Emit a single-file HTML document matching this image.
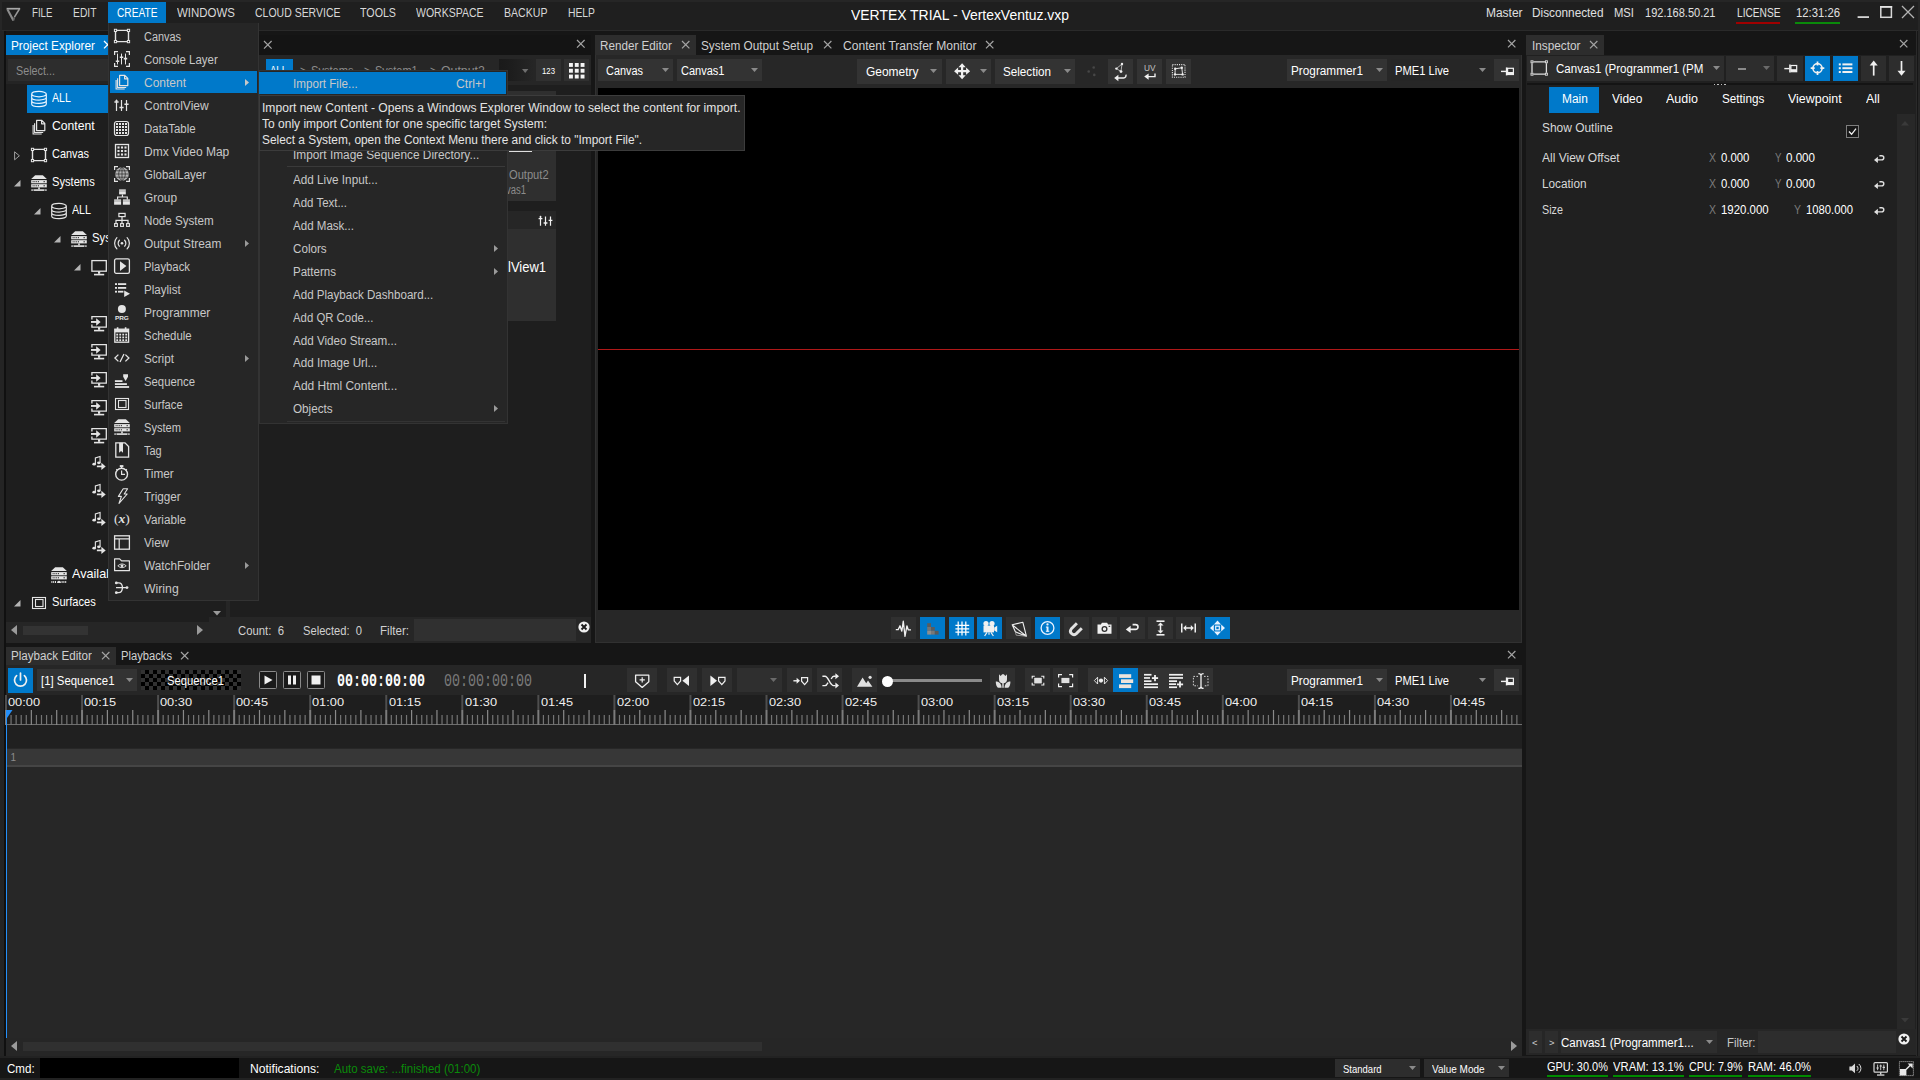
<!DOCTYPE html>
<html lang="en"><head><meta charset="utf-8"><title>VERTEX TRIAL - VertexVentuz.vxp</title>
<style>
html,body{margin:0;padding:0;background:#161616;overflow:hidden}
body{width:1920px;height:1080px;position:relative;font-family:"Liberation Sans",sans-serif;}
#app{position:absolute;left:0;top:0;width:1920px;height:1080px;overflow:hidden;background:#161616}
#app div,#app span,#app svg{position:absolute}
.t{white-space:pre;transform-origin:0 0;display:block}
svg{overflow:visible}
.i{fill:none;stroke:#e6e6e6;stroke-width:1.2}
.f{fill:#e6e6e6;stroke:none}
</style></head><body><div id="app">
<div style="left:0px;top:0px;width:1920px;height:30px;background:#1f1f1f;"></div>
<div style="left:0px;top:30px;width:1920px;height:1px;background:#2a2a2a;"></div>
<div style="left:0px;top:0px;width:1920px;height:2px;background:#262626;"></div>
<div style="left:0px;top:0px;width:2px;height:31px;background:#262626;"></div>
<div style="left:1918px;top:0px;width:2px;height:1080px;background:#262626;"></div>
<div style="left:1916.4px;top:31px;width:0.9px;height:1025px;background:#2a2a2a;"></div>
<div style="left:0px;top:31px;width:4px;height:1025px;background:#242424;"></div>
<div style="left:4px;top:31px;width:2px;height:1025px;background:#101010;"></div>
<div style="left:108px;top:2px;width:58px;height:21px;background:#0079ca;"></div>
<span class="t" style="left:32px;top:7px;font-size:12.5px;line-height:12.5px;color:#d8d8d8;transform:scaleX(0.7763);">FILE</span>
<span class="t" style="left:73px;top:7px;font-size:12.5px;line-height:12.5px;color:#d8d8d8;transform:scaleX(0.8250);">EDIT</span>
<span class="t" style="left:176.5px;top:7px;font-size:12.5px;line-height:12.5px;color:#d8d8d8;transform:scaleX(0.9179);">WINDOWS</span>
<span class="t" style="left:254.5px;top:7px;font-size:12.5px;line-height:12.5px;color:#d8d8d8;transform:scaleX(0.8391);">CLOUD SERVICE</span>
<span class="t" style="left:360px;top:7px;font-size:12.5px;line-height:12.5px;color:#d8d8d8;transform:scaleX(0.8540);">TOOLS</span>
<span class="t" style="left:416px;top:7px;font-size:12.5px;line-height:12.5px;color:#d8d8d8;transform:scaleX(0.8401);">WORKSPACE</span>
<span class="t" style="left:504px;top:7px;font-size:12.5px;line-height:12.5px;color:#d8d8d8;transform:scaleX(0.8462);">BACKUP</span>
<span class="t" style="left:567.5px;top:7px;font-size:12.5px;line-height:12.5px;color:#d8d8d8;transform:scaleX(0.8268);">HELP</span>
<span class="t" style="left:116.5px;top:7px;font-size:12.5px;line-height:12.5px;color:#ffffff;transform:scaleX(0.8136);">CREATE</span>
<span class="t" style="left:851px;top:8px;font-size:14.5px;line-height:14.5px;color:#ffffff;transform:scaleX(0.9603);">VERTEX TRIAL - VertexVentuz.vxp</span>
<span class="t" style="left:1485.5px;top:7px;font-size:12.5px;line-height:12.5px;color:#e0e0e0;transform:scaleX(0.9554);">Master</span>
<span class="t" style="left:1532px;top:7px;font-size:12.5px;line-height:12.5px;color:#e0e0e0;transform:scaleX(0.9439);">Disconnected</span>
<span class="t" style="left:1613.7px;top:7px;font-size:12.5px;line-height:12.5px;color:#e0e0e0;transform:scaleX(0.8995);">MSI</span>
<span class="t" style="left:1645px;top:7px;font-size:12.5px;line-height:12.5px;color:#e0e0e0;transform:scaleX(0.8818);">192.168.50.21</span>
<span class="t" style="left:1736.5px;top:7px;font-size:12.5px;line-height:12.5px;color:#e0e0e0;transform:scaleX(0.8131);">LICENSE</span>
<span class="t" style="left:1795.5px;top:7px;font-size:12.5px;line-height:12.5px;color:#e0e0e0;transform:scaleX(0.9040);">12:31:26</span>
<div style="left:1736px;top:22px;width:44px;height:2px;background:#a00000;"></div>
<div style="left:1795px;top:22px;width:45px;height:2px;background:#0a8a0a;"></div>
<svg style="left:1856px;top:4px" width="60" height="16" viewBox="1856 4 60 16"><rect x="1857.6" y="16.2" width="11.4" height="1.8" fill="#d4d4d4"/><rect x="1880.8" y="6.9" width="10.6" height="10.4" fill="none" stroke="#d8d8d8" stroke-width="1.5"/><rect x="1880" y="6" width="12.2" height="1.6" fill="#e4e4e4"/><path d="M1902 6L1914 18M1914 6L1902 18" fill="none" stroke="#b4b4b4" stroke-width="1.3"/></svg>
<svg style="left:5px;top:6px" width="18" height="17" viewBox="5 6 18 17"><path d="M6.6 8.7H20.2" fill="none" stroke="#a8a8a8" stroke-width="1.7"/><path d="M7.4 9.2L13.4 20.4" fill="none" stroke="#8c8c8c" stroke-width="2.1"/><path d="M19.4 9L14.4 17.2" fill="none" stroke="#9a9a9a" stroke-width="1.5"/><path d="M14.4 17.2L13.4 20.4" fill="none" stroke="#6a6a6a" stroke-width="1.6"/></svg>
<div style="left:0px;top:1056px;width:1920px;height:24px;background:#161616;"></div>
<div style="left:0px;top:1056px;width:1920px;height:2px;background:#222222;"></div>
<div style="left:0px;top:1078px;width:1920px;height:2px;background:#222222;"></div>
<span class="t" style="left:7px;top:1063px;font-size:12.5px;line-height:12.5px;color:#ffffff;transform:scaleX(0.9238);">Cmd:</span>
<div style="left:40px;top:1058px;width:199px;height:20px;background:#000000;"></div>
<span class="t" style="left:249.7px;top:1063px;font-size:12.5px;line-height:12.5px;color:#ffffff;transform:scaleX(0.9684);">Notifications:</span>
<span class="t" style="left:334px;top:1063px;font-size:12px;line-height:12px;color:#0a8a0a;transform:scaleX(0.9577);">Auto save: ...finished (01:00)</span>
<div style="left:1335px;top:1059px;width:85px;height:18px;background:#2d2d2d;"></div>
<span class="t" style="left:1343.4px;top:1064px;font-size:10.5px;line-height:10.5px;color:#ffffff;transform:scaleX(0.9056);">Standard</span>
<div style="left:1424px;top:1059px;width:85px;height:18px;background:#2d2d2d;"></div>
<span class="t" style="left:1432px;top:1064px;font-size:10.5px;line-height:10.5px;color:#ffffff;transform:scaleX(0.9518);">Value Mode</span>
<svg style="left:1408.5px;top:1066.0px" width="7" height="4" viewBox="0 0 7 4"><path d="M0 0h7l-3.5 4z" fill="#8a8a8a"/></svg>
<svg style="left:1497.5px;top:1066.0px" width="7" height="4" viewBox="0 0 7 4"><path d="M0 0h7l-3.5 4z" fill="#8a8a8a"/></svg>
<span class="t" style="left:1547px;top:1061px;font-size:12.5px;line-height:12.5px;color:#ffffff;transform:scaleX(0.8765);">GPU: 30.0%</span>
<div style="left:1547px;top:1075px;width:60.90000000000009px;height:2px;background:#008a00;"></div>
<span class="t" style="left:1613px;top:1061px;font-size:12.5px;line-height:12.5px;color:#ffffff;transform:scaleX(0.9017);">VRAM: 13.1%</span>
<div style="left:1613px;top:1075px;width:70.79999999999995px;height:2px;background:#008a00;"></div>
<span class="t" style="left:1688.8px;top:1061px;font-size:12.5px;line-height:12.5px;color:#ffffff;transform:scaleX(0.8667);">CPU: 7.9%</span>
<div style="left:1688.8px;top:1075px;width:53.600000000000136px;height:2px;background:#008a00;"></div>
<span class="t" style="left:1747.6px;top:1061px;font-size:12.5px;line-height:12.5px;color:#ffffff;transform:scaleX(0.8992);">RAM: 46.0%</span>
<div style="left:1747.6px;top:1075px;width:63.100000000000136px;height:2px;background:#008a00;"></div>
<div style="left:6px;top:35px;width:222px;height:20px;background:#161616;"></div>
<div style="left:6px;top:35px;width:112px;height:20px;background:#0079ca;"></div>
<span class="t" style="left:11px;top:40px;font-size:12.5px;line-height:12.5px;color:#ffffff;transform:scaleX(0.9445);">Project Explorer</span>
<svg style="left:103.6px;top:41.3px" width="7.4" height="7.4" viewBox="0 0 7.4 7.4"><path d="M0 0L7.4 7.4M7.4 0L0 7.4" stroke="#ffffff" stroke-width="1.3" fill="none"/></svg>
<div style="left:6px;top:55px;width:220px;height:587px;background:#1e1e1e;"></div>
<div style="left:6px;top:55px;width:220px;height:29px;background:#242424;"></div>
<div style="left:8px;top:59px;width:200px;height:22px;background:#2d2d2d;"></div>
<span class="t" style="left:16px;top:65px;font-size:12.5px;line-height:12.5px;color:#8c8c8c;transform:scaleX(0.8634);">Select...</span>
<div style="left:27px;top:85px;width:120px;height:28px;background:#0079ca;"></div>
<span class="t" style="left:52px;top:91px;font-size:13px;line-height:13px;color:#ffffff;transform:scaleX(0.8124);">ALL</span>
<span class="t" style="left:52px;top:119px;font-size:13px;line-height:13px;color:#ffffff;transform:scaleX(0.9375);">Content</span>
<span class="t" style="left:52px;top:147px;font-size:13px;line-height:13px;color:#ffffff;transform:scaleX(0.8394);">Canvas</span>
<span class="t" style="left:52px;top:175px;font-size:13px;line-height:13px;color:#ffffff;transform:scaleX(0.8567);">Systems</span>
<span class="t" style="left:72px;top:203px;font-size:13px;line-height:13px;color:#ffffff;transform:scaleX(0.8211);">ALL</span>
<span class="t" style="left:92px;top:231px;font-size:13px;line-height:13px;color:#ffffff;transform:scaleX(0.8699);">System1</span>
<span class="t" style="left:72px;top:567px;font-size:13px;line-height:13px;color:#ffffff;transform:scaleX(0.9709);">Available</span>
<span class="t" style="left:52px;top:595px;font-size:13px;line-height:13px;color:#ffffff;transform:scaleX(0.8536);">Surfaces</span>
<svg style="left:31px;top:90.75px" width="16" height="16" viewBox="0 0 16 16"><path d="M0.7 3.1a7.3 2.7 0 0 1 14.6 0a7.3 2.7 0 0 1-14.6 0V13a7.3 2.7 0 0 0 14.6 0V3.1M0.7 6.4a7.3 2.7 0 0 0 14.6 0M0.7 9.7a7.3 2.7 0 0 0 14.6 0" fill="none" stroke="#e8f4ff" stroke-width="1.2" /></svg>
<svg style="left:31px;top:118.75px" width="16" height="16" viewBox="0 0 16 16"><path d="M5.6 1.4h5.2l3 3v7.2H5.6zM10.6 1.6v3.2h3.2" fill="none" stroke="#e4e4e4" stroke-width="1.2" stroke-linejoin="round"/><path d="M3.6 4.2v9.3h8.6M2.1 6v9h8.6" fill="none" stroke="#e4e4e4" stroke-width="1.1" /></svg>
<svg style="left:31px;top:146.75px" width="16" height="16" viewBox="0 0 16 16"><path d="M2.9 2.4H13.1M2.9 13.6H13.1M1.5 3.9V12.1M14.5 3.9V12.1" fill="none" stroke="#e4e4e4" stroke-width="1.4" /><rect x="0.4" y="1.3" width="2.2" height="2.2" fill="none" stroke="#e4e4e4" stroke-width="1"/><rect x="0.4" y="12.5" width="2.2" height="2.2" fill="none" stroke="#e4e4e4" stroke-width="1"/><rect x="13.4" y="1.3" width="2.2" height="2.2" fill="none" stroke="#e4e4e4" stroke-width="1"/><rect x="13.4" y="12.5" width="2.2" height="2.2" fill="none" stroke="#e4e4e4" stroke-width="1"/></svg>
<svg style="left:31px;top:174.75px" width="16" height="16" viewBox="0 0 16 16"><path d="M4.2 0.2h7.6l4 3.9h-15.6z" fill="#e4e4e4" /><rect x="0.2" y="5.1" width="15.6" height="3.2" fill="#e4e4e4" /><rect x="0.2" y="9.2" width="15.6" height="3.2" fill="#e4e4e4" /><rect x="7.2" y="12.4" width="1.6" height="2" fill="#e4e4e4" /><rect x="0.4" y="14.3" width="15.2" height="1.6" fill="#e4e4e4" /><path d="M1.6 6.7h7M1.6 10.8h7" stroke="#1e1e1e" stroke-width="1" stroke-dasharray="1 0.8"/><path d="M12.5 6.7h1.4M12.5 10.8h1.4" stroke="#1e1e1e" stroke-width="1"/><path d="M2.2 14.3v1.6M13.8 14.3v1.6" stroke="#1e1e1e" stroke-width="0.9"/></svg>
<svg style="left:51px;top:202.75px" width="16" height="16" viewBox="0 0 16 16"><path d="M0.7 3.1a7.3 2.7 0 0 1 14.6 0a7.3 2.7 0 0 1-14.6 0V13a7.3 2.7 0 0 0 14.6 0V3.1M0.7 6.4a7.3 2.7 0 0 0 14.6 0M0.7 9.7a7.3 2.7 0 0 0 14.6 0" fill="none" stroke="#e4e4e4" stroke-width="1.2" /></svg>
<svg style="left:71px;top:230.75px" width="16" height="16" viewBox="0 0 16 16"><path d="M4.2 0.2h7.6l4 3.9h-15.6z" fill="#e4e4e4" /><rect x="0.2" y="5.1" width="15.6" height="3.2" fill="#e4e4e4" /><rect x="0.2" y="9.2" width="15.6" height="3.2" fill="#e4e4e4" /><rect x="7.2" y="12.4" width="1.6" height="2" fill="#e4e4e4" /><rect x="0.4" y="14.3" width="15.2" height="1.6" fill="#e4e4e4" /><path d="M1.6 6.7h7M1.6 10.8h7" stroke="#1e1e1e" stroke-width="1" stroke-dasharray="1 0.8"/><path d="M12.5 6.7h1.4M12.5 10.8h1.4" stroke="#1e1e1e" stroke-width="1"/><path d="M2.2 14.3v1.6M13.8 14.3v1.6" stroke="#1e1e1e" stroke-width="0.9"/></svg>
<svg style="left:91px;top:259.55px" width="16" height="16" viewBox="0 0 16 16"><rect x="0.9" y="0.6" width="14.4" height="10.6" fill="none" stroke="#e4e4e4" stroke-width="1.3"/><rect x="7" y="11.2" width="2.2" height="2.6" fill="#e4e4e4" /><rect x="3" y="13.8" width="10.2" height="1.6" fill="#e4e4e4" /></svg>
<svg style="left:91px;top:315.55px" width="16" height="16" viewBox="0 0 16 16"><path d="M0.9 3.4V0.6h14.4v10.6H0.9V8.6" fill="none" stroke="#e4e4e4" stroke-width="1.3" /><rect x="7" y="11.2" width="2.2" height="2.6" fill="#e4e4e4" /><rect x="3" y="13.8" width="10.2" height="1.6" fill="#e4e4e4" /><rect x="0" y="5" width="6" height="1.9" fill="#e4e4e4" /><path d="M5.2 2.2l4.4 3.75l-4.4 3.75z" fill="#e4e4e4" /></svg>
<svg style="left:91px;top:343.55px" width="16" height="16" viewBox="0 0 16 16"><path d="M0.9 3.4V0.6h14.4v10.6H0.9V8.6" fill="none" stroke="#e4e4e4" stroke-width="1.3" /><rect x="7" y="11.2" width="2.2" height="2.6" fill="#e4e4e4" /><rect x="3" y="13.8" width="10.2" height="1.6" fill="#e4e4e4" /><rect x="0" y="5" width="6" height="1.9" fill="#e4e4e4" /><path d="M5.2 2.2l4.4 3.75l-4.4 3.75z" fill="#e4e4e4" /></svg>
<svg style="left:91px;top:371.55px" width="16" height="16" viewBox="0 0 16 16"><path d="M0.9 3.4V0.6h14.4v10.6H0.9V8.6" fill="none" stroke="#e4e4e4" stroke-width="1.3" /><rect x="7" y="11.2" width="2.2" height="2.6" fill="#e4e4e4" /><rect x="3" y="13.8" width="10.2" height="1.6" fill="#e4e4e4" /><rect x="0" y="5" width="6" height="1.9" fill="#e4e4e4" /><path d="M5.2 2.2l4.4 3.75l-4.4 3.75z" fill="#e4e4e4" /></svg>
<svg style="left:91px;top:399.55px" width="16" height="16" viewBox="0 0 16 16"><path d="M0.9 3.4V0.6h14.4v10.6H0.9V8.6" fill="none" stroke="#e4e4e4" stroke-width="1.3" /><rect x="7" y="11.2" width="2.2" height="2.6" fill="#e4e4e4" /><rect x="3" y="13.8" width="10.2" height="1.6" fill="#e4e4e4" /><rect x="0" y="5" width="6" height="1.9" fill="#e4e4e4" /><path d="M5.2 2.2l4.4 3.75l-4.4 3.75z" fill="#e4e4e4" /></svg>
<svg style="left:91px;top:427.55px" width="16" height="16" viewBox="0 0 16 16"><path d="M0.9 3.4V0.6h14.4v10.6H0.9V8.6" fill="none" stroke="#e4e4e4" stroke-width="1.3" /><rect x="7" y="11.2" width="2.2" height="2.6" fill="#e4e4e4" /><rect x="3" y="13.8" width="10.2" height="1.6" fill="#e4e4e4" /><rect x="0" y="5" width="6" height="1.9" fill="#e4e4e4" /><path d="M5.2 2.2l4.4 3.75l-4.4 3.75z" fill="#e4e4e4" /></svg>
<svg style="left:92px;top:455.75px" width="15" height="15" viewBox="0 0 16 16"><path d="M3.6 8.6V2l5-1.4v6.6" fill="none" stroke="#e4e4e4" stroke-width="1.2" /><ellipse cx="2.3" cy="8.7" rx="1.9" ry="1.5" fill="#e4e4e4"/><ellipse cx="7.3" cy="7.3" rx="1.9" ry="1.5" fill="#e4e4e4"/><rect x="5.2" y="10.2" width="6" height="1.8" fill="#e4e4e4" /><path d="M10 7.2l4.6 3.9l-4.6 3.9z" fill="#e4e4e4" /></svg>
<svg style="left:92px;top:483.75px" width="15" height="15" viewBox="0 0 16 16"><path d="M3.6 8.6V2l5-1.4v6.6" fill="none" stroke="#e4e4e4" stroke-width="1.2" /><ellipse cx="2.3" cy="8.7" rx="1.9" ry="1.5" fill="#e4e4e4"/><ellipse cx="7.3" cy="7.3" rx="1.9" ry="1.5" fill="#e4e4e4"/><rect x="5.2" y="10.2" width="6" height="1.8" fill="#e4e4e4" /><path d="M10 7.2l4.6 3.9l-4.6 3.9z" fill="#e4e4e4" /></svg>
<svg style="left:92px;top:511.75px" width="15" height="15" viewBox="0 0 16 16"><path d="M3.6 8.6V2l5-1.4v6.6" fill="none" stroke="#e4e4e4" stroke-width="1.2" /><ellipse cx="2.3" cy="8.7" rx="1.9" ry="1.5" fill="#e4e4e4"/><ellipse cx="7.3" cy="7.3" rx="1.9" ry="1.5" fill="#e4e4e4"/><rect x="5.2" y="10.2" width="6" height="1.8" fill="#e4e4e4" /><path d="M10 7.2l4.6 3.9l-4.6 3.9z" fill="#e4e4e4" /></svg>
<svg style="left:92px;top:539.75px" width="15" height="15" viewBox="0 0 16 16"><path d="M3.6 8.6V2l5-1.4v6.6" fill="none" stroke="#e4e4e4" stroke-width="1.2" /><ellipse cx="2.3" cy="8.7" rx="1.9" ry="1.5" fill="#e4e4e4"/><ellipse cx="7.3" cy="7.3" rx="1.9" ry="1.5" fill="#e4e4e4"/><rect x="5.2" y="10.2" width="6" height="1.8" fill="#e4e4e4" /><path d="M10 7.2l4.6 3.9l-4.6 3.9z" fill="#e4e4e4" /></svg>
<svg style="left:51px;top:566.75px" width="16" height="16" viewBox="0 0 16 16"><path d="M4.2 0.2h7.6l4 3.9h-15.6z" fill="#e4e4e4" /><rect x="0.2" y="5.1" width="15.6" height="3.2" fill="#e4e4e4" /><rect x="0.2" y="9.2" width="15.6" height="3.2" fill="#e4e4e4" /><path d="M1.6 6.7h7M1.6 10.8h7" stroke="#1e1e1e" stroke-width="1" stroke-dasharray="1 0.8"/><path d="M12.5 6.7h1.4M12.5 10.8h1.4" stroke="#1e1e1e" stroke-width="1"/><path d="M0.4 14.9h5M10.6 14.9h5" stroke="#e4e4e4" stroke-width="2" stroke-dasharray="1 0.8"/><path d="M6 15.9a2 2.2 0 0 1 4 0z" fill="#e4e4e4" /></svg>
<svg style="left:31px;top:594.75px" width="16" height="16" viewBox="0 0 16 16"><rect x="1.5" y="2.5" width="13" height="11" fill="none" stroke="#e4e4e4" stroke-width="1.1"/><rect x="4.5" y="4.5" width="7.5" height="7" fill="none" stroke="#e4e4e4" stroke-width="1.1"/></svg>
<svg style="left:14px;top:150.5px" width="7" height="10"><path d="M0.6 0.8v8l4.8-4z" fill="none" stroke="#a0a0a0" stroke-width="1"/></svg>
<svg style="left:14px;top:179.75px" width="7" height="7"><path d="M6.5 0v6.5H0z" fill="#b4b4b4"/></svg>
<svg style="left:34px;top:207.75px" width="7" height="7"><path d="M6.5 0v6.5H0z" fill="#b4b4b4"/></svg>
<svg style="left:54px;top:235.75px" width="7" height="7"><path d="M6.5 0v6.5H0z" fill="#b4b4b4"/></svg>
<svg style="left:74px;top:263.75px" width="7" height="7"><path d="M6.5 0v6.5H0z" fill="#b4b4b4"/></svg>
<svg style="left:14px;top:599.75px" width="7" height="7"><path d="M6.5 0v6.5H0z" fill="#b4b4b4"/></svg>
<div style="left:209px;top:84px;width:17px;height:538px;background:#1e1e1e;"></div>
<svg style="left:213.0px;top:610.75px" width="8" height="4.5" viewBox="0 0 8 4.5"><path d="M0 0h8l-4.0 4.5z" fill="#9a9a9a"/></svg>
<div style="left:6px;top:622px;width:220px;height:20.6px;background:#262626;"></div>
<div style="left:209px;top:617px;width:17px;height:5px;background:#262626;"></div>
<div style="left:23px;top:626px;width:65px;height:9px;background:#333333;"></div>
<svg style="left:11px;top:625px" width="6" height="10"><path d="M6 0v10L0 5z" fill="#9a9a9a"/></svg>
<svg style="left:197px;top:625px" width="6" height="10"><path d="M0 0v10L6 5z" fill="#9a9a9a"/></svg>
<div style="left:226px;top:55px;width:4px;height:588px;background:#262626;"></div>
<div style="left:230px;top:35px;width:361px;height:20px;background:#141414;"></div>
<svg style="left:263.59999999999997px;top:41.2px" width="7.6" height="7.6" viewBox="0 0 7.6 7.6"><path d="M0 0L7.6 7.6M7.6 0L0 7.6" stroke="#a4a4a4" stroke-width="1.2" fill="none"/></svg>
<svg style="left:576.7px;top:40.2px" width="7.6" height="7.6" viewBox="0 0 7.6 7.6"><path d="M0 0L7.6 7.6M7.6 0L0 7.6" stroke="#a4a4a4" stroke-width="1.2" fill="none"/></svg>
<div style="left:230px;top:55px;width:361px;height:30px;background:#262626;"></div>
<div style="left:230px;top:85px;width:361px;height:532px;background:#1e1e1e;"></div>
<div style="left:265.5px;top:59px;width:27.5px;height:22px;background:#0079ca;"></div>
<span class="t" style="left:270px;top:65px;font-size:12.5px;line-height:12.5px;color:#ffffff;transform:scaleX(0.7640);">ALL</span>
<span class="t" style="left:299.5px;top:65px;font-size:12.5px;line-height:12.5px;color:#8c8c8c;transform:scaleX(0.8205);">&gt;</span>
<span class="t" style="left:310.5px;top:65px;font-size:12.5px;line-height:12.5px;color:#8c8c8c;transform:scaleX(0.8866);">Systems</span>
<span class="t" style="left:364px;top:65px;font-size:12.5px;line-height:12.5px;color:#8c8c8c;transform:scaleX(0.8205);">&gt;</span>
<span class="t" style="left:375px;top:65px;font-size:12.5px;line-height:12.5px;color:#8c8c8c;transform:scaleX(0.8779);">System1</span>
<span class="t" style="left:429.7px;top:65px;font-size:12.5px;line-height:12.5px;color:#8c8c8c;transform:scaleX(0.8205);">&gt;</span>
<span class="t" style="left:440.6px;top:65px;font-size:12.5px;line-height:12.5px;color:#8c8c8c;transform:scaleX(0.9846);">Output2</span>
<div style="left:499px;top:59px;width:35px;height:22px;background:linear-gradient(90deg,#1a1a1a 0%,#1c1c1c 25%,#262626 100%);"></div>
<svg style="left:521.8px;top:69.0px" width="6.4" height="4" viewBox="0 0 6.4 4"><path d="M0 0h6.4l-3.2 4z" fill="#6e6e6e"/></svg>
<div style="left:536px;top:59px;width:25px;height:22px;background:#303030;"></div>
<span class="t" style="left:542px;top:67px;font-size:9px;line-height:9px;color:#ffffff;transform:scaleX(0.8649);">123</span>
<div style="left:564px;top:59px;width:24.6px;height:22px;background:#303030;"></div>
<svg style="left:569px;top:63.4px" width="16" height="16" fill="#f4f4f4"><rect x="0" y="0" width="3.9" height="3.9"/><rect x="0" y="5.8" width="3.9" height="3.9"/><rect x="0" y="11.6" width="3.9" height="3.9"/><rect x="5.8" y="0" width="3.9" height="3.9"/><rect x="5.8" y="5.8" width="3.9" height="3.9"/><rect x="5.8" y="11.6" width="3.9" height="3.9"/><rect x="11.6" y="0" width="3.9" height="3.9"/><rect x="11.6" y="5.8" width="3.9" height="3.9"/><rect x="11.6" y="11.6" width="3.9" height="3.9"/></svg>
<div style="left:508px;top:91px;width:48px;height:109.5px;background:#2f2f2f;"></div>
<div style="left:509px;top:150px;width:23px;height:2px;background:#e0e0e0;"></div>
<span class="t" style="left:509px;top:169px;font-size:12px;line-height:12px;color:#8c8c8c;transform:scaleX(0.9273);">Output2</span>
<span class="t" style="left:506px;top:184px;font-size:12px;line-height:12px;color:#8c8c8c;transform:scaleX(0.7887);">vas1</span>
<div style="left:508px;top:211px;width:48px;height:110px;background:#2f2f2f;"></div>
<div style="left:508px;top:211px;width:48px;height:18px;background:#262626;"></div>
<span class="t" style="left:508px;top:260px;font-size:14px;line-height:14px;color:#ffffff;transform:scaleX(0.9268);">lView1</span>
<div style="left:230px;top:617px;width:361px;height:26px;background:#262626;"></div>
<span class="t" style="left:238px;top:625px;font-size:12.5px;line-height:12.5px;color:#d0d0d0;transform:scaleX(0.9067);">Count:  6</span>
<span class="t" style="left:302.5px;top:625px;font-size:12.5px;line-height:12.5px;color:#d0d0d0;transform:scaleX(0.8937);">Selected:  0</span>
<span class="t" style="left:380px;top:625px;font-size:12.5px;line-height:12.5px;color:#d0d0d0;transform:scaleX(0.9280);">Filter:</span>
<div style="left:414px;top:619px;width:162px;height:21.7px;background:#303030;"></div>
<svg style="left:577.6px;top:620.6px" width="12" height="12" viewBox="-6 -6 12 12"><circle r="5.6" fill="#f0f0f0"/><path d="M-2.5 -2.5L2.5 2.5M2.5 -2.5L-2.5 2.5" stroke="#1a1a1a" stroke-width="1.9"/></svg>
<div style="left:595px;top:35px;width:927px;height:20px;background:#161616;"></div>
<div style="left:595px;top:35px;width:101px;height:20px;background:#2d2d2d;"></div>
<span class="t" style="left:600px;top:40px;font-size:12.5px;line-height:12.5px;color:#d0d0d0;transform:scaleX(0.9335);">Render Editor</span>
<svg style="left:681.8px;top:41.3px" width="7.4" height="7.4" viewBox="0 0 7.4 7.4"><path d="M0 0L7.4 7.4M7.4 0L0 7.4" stroke="#a4a4a4" stroke-width="1.2" fill="none"/></svg>
<span class="t" style="left:701px;top:40px;font-size:12.5px;line-height:12.5px;color:#d0d0d0;transform:scaleX(0.9427);">System Output Setup</span>
<svg style="left:823.8px;top:41.3px" width="7.4" height="7.4" viewBox="0 0 7.4 7.4"><path d="M0 0L7.4 7.4M7.4 0L0 7.4" stroke="#a4a4a4" stroke-width="1.2" fill="none"/></svg>
<span class="t" style="left:842.5px;top:40px;font-size:12.5px;line-height:12.5px;color:#d0d0d0;transform:scaleX(0.9655);">Content Transfer Monitor</span>
<svg style="left:985.8px;top:41.3px" width="7.4" height="7.4" viewBox="0 0 7.4 7.4"><path d="M0 0L7.4 7.4M7.4 0L0 7.4" stroke="#a4a4a4" stroke-width="1.2" fill="none"/></svg>
<svg style="left:1508.3px;top:40.3px" width="7.4" height="7.4" viewBox="0 0 7.4 7.4"><path d="M0 0L7.4 7.4M7.4 0L0 7.4" stroke="#a4a4a4" stroke-width="1.2" fill="none"/></svg>
<div style="left:595px;top:55px;width:927px;height:588px;background:#272727;"></div>
<div style="left:595px;top:55px;width:1px;height:588px;background:#313131;"></div>
<div style="left:595px;top:642px;width:927px;height:1px;background:#313131;"></div>
<div style="left:1521px;top:55px;width:1px;height:588px;background:#313131;"></div>
<div style="left:598px;top:88px;width:921px;height:521.5px;background:#000000;"></div>
<div style="left:598px;top:349px;width:921px;height:1px;background:#b01818;"></div>
<div style="left:598px;top:59px;width:75px;height:22px;background:#333333;"></div>
<span class="t" style="left:606px;top:65px;font-size:12.5px;line-height:12.5px;color:#ffffff;transform:scaleX(0.8728);">Canvas</span>
<svg style="left:661.5px;top:68.0px" width="7" height="4" viewBox="0 0 7 4"><path d="M0 0h7l-3.5 4z" fill="#8a8a8a"/></svg>
<div style="left:677px;top:59px;width:85px;height:22px;background:#333333;"></div>
<span class="t" style="left:681px;top:65px;font-size:12.5px;line-height:12.5px;color:#ffffff;transform:scaleX(0.8816);">Canvas1</span>
<svg style="left:750.5px;top:68.0px" width="7" height="4" viewBox="0 0 7 4"><path d="M0 0h7l-3.5 4z" fill="#8a8a8a"/></svg>
<div style="left:857px;top:59px;width:85px;height:24.5px;background:#333333;"></div>
<span class="t" style="left:865.5px;top:66px;font-size:12.5px;line-height:12.5px;color:#ffffff;transform:scaleX(0.9564);">Geometry</span>
<svg style="left:930.2px;top:68.5px" width="7" height="4" viewBox="0 0 7 4"><path d="M0 0h7l-3.5 4z" fill="#8a8a8a"/></svg>
<div style="left:946px;top:59px;width:45px;height:24.5px;background:#333333;"></div>
<svg style="left:979.5px;top:68.5px" width="7" height="4" viewBox="0 0 7 4"><path d="M0 0h7l-3.5 4z" fill="#8a8a8a"/></svg>
<div style="left:995px;top:59px;width:80px;height:24.5px;background:#333333;"></div>
<span class="t" style="left:1003px;top:66px;font-size:12.5px;line-height:12.5px;color:#ffffff;transform:scaleX(0.9332);">Selection</span>
<svg style="left:1063.5px;top:68.5px" width="7" height="4" viewBox="0 0 7 4"><path d="M0 0h7l-3.5 4z" fill="#8a8a8a"/></svg>
<div style="left:1108px;top:59px;width:25px;height:24.5px;background:#333333;"></div>
<div style="left:1137px;top:59px;width:25px;height:24.5px;background:#333333;"></div>
<div style="left:1166px;top:59px;width:25px;height:24.5px;background:#333333;"></div>
<div style="left:1287px;top:59px;width:100px;height:22px;background:#333333;"></div>
<span class="t" style="left:1291px;top:65px;font-size:12.5px;line-height:12.5px;color:#ffffff;transform:scaleX(0.9421);">Programmer1</span>
<svg style="left:1375.5px;top:68.0px" width="7" height="4" viewBox="0 0 7 4"><path d="M0 0h7l-3.5 4z" fill="#8a8a8a"/></svg>
<div style="left:1391px;top:59px;width:99px;height:22px;background:#262626;"></div>
<span class="t" style="left:1395px;top:65px;font-size:12.5px;line-height:12.5px;color:#ffffff;transform:scaleX(0.8933);">PME1 Live</span>
<svg style="left:1479.0px;top:68.0px" width="7" height="4" viewBox="0 0 7 4"><path d="M0 0h7l-3.5 4z" fill="#8a8a8a"/></svg>
<div style="left:1494px;top:59px;width:25px;height:22px;background:#333333;"></div>
<div style="left:891px;top:617px;width:25px;height:22px;background:#303030;"></div>
<svg style="left:891px;top:617px" width="25" height="22" viewBox="0 0 25 22"><path d="M4.8 12.6h2.4l1.8-3.8l1.8 5.4l1.5-10l1.7 15.2l1.9-10.6l1.3 4h2.8" fill="none" stroke="#f0f0f0" stroke-width="1.3" stroke-linejoin="round"/></svg>
<div style="left:919.7px;top:617px;width:25px;height:22px;background:#0079ca;"></div>
<svg style="left:919.7px;top:617px" width="25" height="22" viewBox="0 0 25 22"><rect x="7.2" y="6.2" width="3.8" height="3.8" fill="#5c5c5c"/><rect x="7.2" y="10" width="3.8" height="3.8" fill="#747474"/><rect x="7.2" y="13.8" width="3.8" height="3.8" fill="#8e8e8e"/><rect x="11" y="10" width="3.8" height="3.8" fill="#5c5c5c"/><rect x="11" y="13.8" width="3.8" height="3.8" fill="#787878"/><rect x="14.8" y="13.8" width="3.8" height="3.8" fill="#5a5a5a"/></svg>
<div style="left:948.8px;top:617px;width:25px;height:22px;background:#0079ca;"></div>
<svg style="left:948.8px;top:617px" width="25" height="22" viewBox="0 0 25 22"><path d="M9.2 4.6v14M13 4.6v14M16.8 4.6v14M6.4 8.4h13.8M6.4 11.8h13.8M6.4 15.2h13.8" fill="none" stroke="#ffffff" stroke-width="1.25" /></svg>
<div style="left:977px;top:617px;width:25px;height:22px;background:#0079ca;"></div>
<svg style="left:977px;top:617px" width="25" height="22" viewBox="0 0 25 22"><circle cx="9" cy="6.6" r="2.6" fill="#f0f0f0"/><circle cx="15" cy="6.6" r="2.6" fill="#f0f0f0"/><rect x="6.5" y="8.6" width="10.5" height="6.8" fill="#f0f0f0"/><path d="M17.2 10.4l3-1.6v6.4l-3-1.6z" fill="#f0f0f0" /><path d="M10 15.4l-2.4 3.6M14 15.4l2.4 3.6M12 15.4v2.4" fill="none" stroke="#f0f0f0" stroke-width="1.2" /></svg>
<div style="left:1005.7px;top:617px;width:25px;height:22px;background:#303030;"></div>
<svg style="left:1005.7px;top:617px" width="25" height="22" viewBox="0 0 25 22"><path d="M6.2 7.8l10.6-2.6l3.6 14l-11-4.4zM6.2 7.8l14.2 11.4" fill="none" stroke="#f0f0f0" stroke-width="1.1" stroke-linejoin="round"/><path d="M9.4 14.8l0.8 3.4l10.2 1" fill="none" stroke="#b0b0b0" stroke-width="0.8" /></svg>
<div style="left:1034.9px;top:617px;width:25px;height:22px;background:#0079ca;"></div>
<svg style="left:1034.9px;top:617px" width="25" height="22" viewBox="0 0 25 22"><circle cx="12.5" cy="11" r="6.4" fill="none" stroke="#e8f2ff" stroke-width="1.3"/><rect x="11.6" y="9.6" width="1.9" height="5" fill="#e8f2ff"/><circle cx="12.5" cy="7.4" r="1.15" fill="#e8f2ff"/><rect x="10.9" y="9.6" width="1.6" height="1" fill="#e8f2ff"/><rect x="10.9" y="13.8" width="3.4" height="1" fill="#e8f2ff"/></svg>
<div style="left:1063.7px;top:617px;width:25px;height:22px;background:#303030;"></div>
<svg style="left:1063.7px;top:617px" width="25" height="22" viewBox="0 0 25 22"><path d="M12.9 6.3L7.2 12a3.5 3.5 0 0 0 4.9 4.9l5.7-5.7" fill="none" stroke="#e2e2e2" stroke-width="2.9" /></svg>
<div style="left:1092px;top:617px;width:25px;height:22px;background:#303030;"></div>
<svg style="left:1092px;top:617px" width="25" height="22" viewBox="0 0 25 22"><path d="M5.5 7.5h3.4l1-1.7h5.2l1 1.7h3.4v9.3h-14z" fill="#f0f0f0" /><circle cx="12.5" cy="12" r="3" fill="#2d2d2d"/><circle cx="12.5" cy="12" r="1.7" fill="#f0f0f0"/><rect x="16.6" y="8.8" width="1.6" height="1.1" fill="#2d2d2d"/></svg>
<div style="left:1120.2px;top:617px;width:25px;height:22px;background:#303030;"></div>
<svg style="left:1120.2px;top:617px" width="25" height="22" viewBox="0 0 25 22"><path d="M8.4 12.4h7.2a2.4 2.4 0 0 0 0-4.8h-3" fill="none" stroke="#f0f0f0" stroke-width="1.6" /><path d="M10.6 8.8l-4.8 3.6l4.8 3.6z" fill="#f0f0f0" /></svg>
<div style="left:1148px;top:617px;width:25px;height:22px;background:#303030;"></div>
<svg style="left:1148px;top:617px" width="25" height="22" viewBox="0 0 25 22"><rect x="8.5" y="3.4" width="8" height="1.6" fill="#f0f0f0"/><rect x="8.5" y="17" width="8" height="1.6" fill="#f0f0f0"/><path d="M12.5 7.4v7.2" fill="none" stroke="#f0f0f0" stroke-width="1.5" /><path d="M12.5 5.6l3 3h-6z" fill="#f0f0f0" /><path d="M12.5 16.4l3-3h-6z" fill="#f0f0f0" /></svg>
<div style="left:1176.2px;top:617px;width:25px;height:22px;background:#303030;"></div>
<svg style="left:1176.2px;top:617px" width="25" height="22" viewBox="0 0 25 22"><rect x="5" y="6.5" width="1.5" height="9" fill="#f0f0f0"/><rect x="18.5" y="6.5" width="1.5" height="9" fill="#f0f0f0"/><path d="M9.4 11h6.2" fill="none" stroke="#f0f0f0" stroke-width="1.5" /><path d="M7.2 11l3-3v6z" fill="#f0f0f0" /><path d="M17.8 11l-3-3v6z" fill="#f0f0f0" /></svg>
<div style="left:1205px;top:617px;width:25px;height:22px;background:#0079ca;"></div>
<svg style="left:1205px;top:617px" width="25" height="22" viewBox="0 0 25 22"><path d="M12.5 3.6l3.6 3.8h-7.2zM12.5 18.4l3.6-3.8h-7.2zM5 11l3.8-3.6v7.2zM20 11l-3.8-3.6v7.2z" fill="#e8f2ff" /><rect x="10.7" y="9.2" width="3.6" height="3.6" fill="none" stroke="#e8f2ff" stroke-width="1.2"/></svg>
<div style="left:1526px;top:35px;width:390px;height:20px;background:#161616;"></div>
<div style="left:1526px;top:35px;width:78px;height:20px;background:#2d2d2d;"></div>
<span class="t" style="left:1531.5px;top:40px;font-size:12.5px;line-height:12.5px;color:#d0d0d0;transform:scaleX(0.9432);">Inspector</span>
<svg style="left:1589.8px;top:41.3px" width="7.4" height="7.4" viewBox="0 0 7.4 7.4"><path d="M0 0L7.4 7.4M7.4 0L0 7.4" stroke="#a4a4a4" stroke-width="1.2" fill="none"/></svg>
<svg style="left:1900.3px;top:40.3px" width="7.4" height="7.4" viewBox="0 0 7.4 7.4"><path d="M0 0L7.4 7.4M7.4 0L0 7.4" stroke="#a4a4a4" stroke-width="1.2" fill="none"/></svg>
<div style="left:1526px;top:55px;width:390px;height:1000px;background:#202020;"></div>
<div style="left:1527px;top:56px;width:197px;height:25px;background:#2d2d2d;"></div>
<span class="t" style="left:1556px;top:63px;font-size:12.5px;line-height:12.5px;color:#ffffff;transform:scaleX(0.9226);">Canvas1 (Programmer1 (PM</span>
<svg style="left:1712.5px;top:66.0px" width="7" height="4" viewBox="0 0 7 4"><path d="M0 0h7l-3.5 4z" fill="#8a8a8a"/></svg>
<div style="left:1726px;top:56px;width:48px;height:25px;background:#2d2d2d;"></div>
<div style="left:1737.8px;top:68.2px;width:8px;height:1.7px;background:#8a8a8a;"></div>
<svg style="left:1762.5px;top:66.0px" width="7" height="4" viewBox="0 0 7 4"><path d="M0 0h7l-3.5 4z" fill="#6a6a6a"/></svg>
<div style="left:1776.7px;top:56px;width:26.3px;height:25px;background:#2d2d2d;"></div>
<div style="left:1805px;top:56px;width:25px;height:25px;background:#0079ca;"></div>
<div style="left:1833px;top:56px;width:25px;height:25px;background:#0079ca;"></div>
<div style="left:1861px;top:56px;width:25px;height:25px;background:#2d2d2d;"></div>
<div style="left:1889px;top:56px;width:24.5px;height:25px;background:#2d2d2d;"></div>
<div style="left:1527px;top:83px;width:386px;height:2px;background:#141414;"></div>
<div style="left:1713.5px;top:83.5px;width:1.8px;height:1.5px;background:#c0c0c0;"></div>
<div style="left:1717.1px;top:83.5px;width:1.8px;height:1.5px;background:#c0c0c0;"></div>
<div style="left:1720.7px;top:83.5px;width:1.8px;height:1.5px;background:#c0c0c0;"></div>
<div style="left:1724.3px;top:83.5px;width:1.8px;height:1.5px;background:#c0c0c0;"></div>
<div style="left:1549px;top:87px;width:50px;height:26px;background:#0079ca;"></div>
<span class="t" style="left:1561.7px;top:93px;font-size:12.5px;line-height:12.5px;color:#ffffff;transform:scaleX(0.9522);">Main</span>
<span class="t" style="left:1611.6px;top:93px;font-size:12.5px;line-height:12.5px;color:#ffffff;transform:scaleX(0.9575);">Video</span>
<span class="t" style="left:1666px;top:93px;font-size:12.5px;line-height:12.5px;color:#ffffff;transform:scaleX(1.0005);">Audio</span>
<span class="t" style="left:1721.6px;top:93px;font-size:12.5px;line-height:12.5px;color:#ffffff;transform:scaleX(0.9386);">Settings</span>
<span class="t" style="left:1788px;top:93px;font-size:12.5px;line-height:12.5px;color:#ffffff;transform:scaleX(0.9947);">Viewpoint</span>
<span class="t" style="left:1865.8px;top:93px;font-size:12.5px;line-height:12.5px;color:#ffffff;transform:scaleX(0.9924);">All</span>
<span class="t" style="left:1542px;top:122px;font-size:12.5px;line-height:12.5px;color:#d8d8d8;transform:scaleX(0.9548);">Show Outline</span>
<span class="t" style="left:1542px;top:152px;font-size:12.5px;line-height:12.5px;color:#d8d8d8;transform:scaleX(0.9613);">All View Offset</span>
<span class="t" style="left:1542px;top:178px;font-size:12.5px;line-height:12.5px;color:#d8d8d8;transform:scaleX(0.9415);">Location</span>
<span class="t" style="left:1542px;top:204px;font-size:12.5px;line-height:12.5px;color:#d8d8d8;transform:scaleX(0.8632);">Size</span>
<span class="t" style="left:1709px;top:152px;font-size:12.5px;line-height:12.5px;color:#7a7a7a;transform:scaleX(0.8390);">X</span>
<span class="t" style="left:1721px;top:152px;font-size:12.5px;line-height:12.5px;color:#ffffff;transform:scaleX(0.9079);">0.000</span>
<span class="t" style="left:1774.5px;top:152px;font-size:12.5px;line-height:12.5px;color:#7a7a7a;transform:scaleX(0.7790);">Y</span>
<span class="t" style="left:1786px;top:152px;font-size:12.5px;line-height:12.5px;color:#ffffff;transform:scaleX(0.9271);">0.000</span>
<span class="t" style="left:1709px;top:178px;font-size:12.5px;line-height:12.5px;color:#7a7a7a;transform:scaleX(0.8390);">X</span>
<span class="t" style="left:1721px;top:178px;font-size:12.5px;line-height:12.5px;color:#ffffff;transform:scaleX(0.9079);">0.000</span>
<span class="t" style="left:1774.5px;top:178px;font-size:12.5px;line-height:12.5px;color:#7a7a7a;transform:scaleX(0.7790);">Y</span>
<span class="t" style="left:1786px;top:178px;font-size:12.5px;line-height:12.5px;color:#ffffff;transform:scaleX(0.9271);">0.000</span>
<span class="t" style="left:1709px;top:204px;font-size:12.5px;line-height:12.5px;color:#7a7a7a;transform:scaleX(0.8390);">X</span>
<span class="t" style="left:1721.4px;top:204px;font-size:12.5px;line-height:12.5px;color:#ffffff;transform:scaleX(0.9129);">1920.000</span>
<span class="t" style="left:1794px;top:204px;font-size:12.5px;line-height:12.5px;color:#7a7a7a;transform:scaleX(0.8390);">Y</span>
<span class="t" style="left:1806px;top:204px;font-size:12.5px;line-height:12.5px;color:#ffffff;transform:scaleX(0.9014);">1080.000</span>
<svg style="left:1846px;top:125px" width="13" height="13"><rect x="0.5" y="0.5" width="12" height="12" fill="#181818" stroke="#7e7e7e"/><path d="M3 6.5l2.6 2.8L10 3.6" fill="none" stroke="#f0f0f0" stroke-width="1.3"/></svg>
<svg style="left:1874px;top:154px" width="11" height="10" viewBox="0 -5 11 10"><path d="M3 0.9H7.7a2.1 2.1 0 0 0 0-4.2H5.4" fill="none" stroke="#e0e0e0" stroke-width="1.4"/><path d="M3.9 -2.2L0 0.9L3.9 4z" fill="#e0e0e0"/></svg>
<svg style="left:1874px;top:180px" width="11" height="10" viewBox="0 -5 11 10"><path d="M3 0.9H7.7a2.1 2.1 0 0 0 0-4.2H5.4" fill="none" stroke="#e0e0e0" stroke-width="1.4"/><path d="M3.9 -2.2L0 0.9L3.9 4z" fill="#e0e0e0"/></svg>
<svg style="left:1874px;top:206px" width="11" height="10" viewBox="0 -5 11 10"><path d="M3 0.9H7.7a2.1 2.1 0 0 0 0-4.2H5.4" fill="none" stroke="#e0e0e0" stroke-width="1.4"/><path d="M3.9 -2.2L0 0.9L3.9 4z" fill="#e0e0e0"/></svg>
<div style="left:1897px;top:114px;width:18px;height:915px;background:#282828;"></div>
<svg style="left:1901px;top:121px" width="8" height="4.5"><path d="M0 4.5h8L4 0z" fill="#3a3a3a"/></svg>
<svg style="left:1901.0px;top:1017.75px" width="8" height="4.5" viewBox="0 0 8 4.5"><path d="M0 0h8l-4.0 4.5z" fill="#3a3a3a"/></svg>
<div style="left:1526px;top:1029px;width:390px;height:26px;background:#262626;"></div>
<div style="left:1529px;top:1031px;width:13px;height:21.5px;background:#2d2d2d;"></div>
<span class="t" style="left:1532px;top:1039px;font-size:9px;line-height:9px;color:#d0d0d0;transform:scaleX(1.0445);">&lt;</span>
<div style="left:1545px;top:1031px;width:13px;height:21.5px;background:#2d2d2d;"></div>
<span class="t" style="left:1548.5px;top:1039px;font-size:9px;line-height:9px;color:#d0d0d0;transform:scaleX(1.0445);">&gt;</span>
<div style="left:1561px;top:1031px;width:156px;height:21.5px;background:#2d2d2d;"></div>
<span class="t" style="left:1561px;top:1037px;font-size:12.5px;line-height:12.5px;color:#ffffff;transform:scaleX(0.9220);">Canvas1 (Programmer1...</span>
<svg style="left:1705.5px;top:1039.5px" width="7" height="4" viewBox="0 0 7 4"><path d="M0 0h7l-3.5 4z" fill="#8a8a8a"/></svg>
<span class="t" style="left:1727px;top:1037px;font-size:12.5px;line-height:12.5px;color:#c8c8c8;transform:scaleX(0.9120);">Filter:</span>
<div style="left:1758px;top:1031px;width:138px;height:21.5px;background:#2d2d2d;"></div>
<svg style="left:1897.6px;top:1033px" width="12" height="12" viewBox="-6 -6 12 12"><circle r="5.6" fill="#f0f0f0"/><path d="M-2.5 -2.5L2.5 2.5M2.5 -2.5L-2.5 2.5" stroke="#1a1a1a" stroke-width="1.9"/></svg>
<div style="left:6px;top:645px;width:1516px;height:20px;background:#161616;"></div>
<div style="left:6px;top:647px;width:110px;height:18px;background:#2d2d2d;"></div>
<span class="t" style="left:11.2px;top:650px;font-size:12.5px;line-height:12.5px;color:#d0d0d0;transform:scaleX(0.9302);">Playback Editor</span>
<svg style="left:101.8px;top:651.8px" width="7.4" height="7.4" viewBox="0 0 7.4 7.4"><path d="M0 0L7.4 7.4M7.4 0L0 7.4" stroke="#a4a4a4" stroke-width="1.2" fill="none"/></svg>
<span class="t" style="left:121px;top:650px;font-size:12.5px;line-height:12.5px;color:#d0d0d0;transform:scaleX(0.8950);">Playbacks</span>
<svg style="left:181.3px;top:651.8px" width="7.4" height="7.4" viewBox="0 0 7.4 7.4"><path d="M0 0L7.4 7.4M7.4 0L0 7.4" stroke="#a4a4a4" stroke-width="1.2" fill="none"/></svg>
<svg style="left:1508.3px;top:650.8px" width="7.4" height="7.4" viewBox="0 0 7.4 7.4"><path d="M0 0L7.4 7.4M7.4 0L0 7.4" stroke="#a4a4a4" stroke-width="1.2" fill="none"/></svg>
<div style="left:6px;top:665px;width:1516px;height:30px;background:#262626;"></div>
<div style="left:6px;top:695px;width:1516px;height:30px;background:#1e1e1e;"></div>
<div style="left:6px;top:725px;width:1516px;height:23px;background:#202020;"></div>
<div style="left:6px;top:748px;width:1516px;height:290px;background:#272727;"></div>
<div style="left:6px;top:748.5px;width:1516px;height:18.5px;background:#373737;"></div>
<div style="left:6px;top:765.2px;width:1516px;height:1.8px;background:#454545;"></div>
<div style="left:6px;top:1038px;width:1516px;height:18px;background:#262626;"></div>
<span class="t" style="left:10.6px;top:753px;font-size:10px;line-height:10px;color:#8c8c8c;">1</span>
<div style="left:8px;top:668px;width:25px;height:25px;background:#0079ca;"></div>
<div style="left:37px;top:669px;width:100px;height:22px;background:#333333;"></div>
<span class="t" style="left:41.25px;top:675px;font-size:12.5px;line-height:12.5px;color:#ffffff;transform:scaleX(0.9116);">[1] Sequence1</span>
<svg style="left:125.5px;top:678.0px" width="7" height="4" viewBox="0 0 7 4"><path d="M0 0h7l-3.5 4z" fill="#8a8a8a"/></svg>
<svg style="left:141px;top:670px" width="100" height="20"><defs><pattern id="ck" width="8" height="8" patternUnits="userSpaceOnUse"><rect width="8" height="8" fill="#000"/><rect width="4" height="4" fill="#323232"/><rect x="4" y="4" width="4" height="4" fill="#323232"/></pattern></defs><rect width="100" height="20" fill="url(#ck)"/></svg>
<span class="t" style="left:167px;top:675px;font-size:12.5px;line-height:12.5px;color:#ffffff;transform:scaleX(0.9010);">Sequence1</span>
<svg style="left:259px;top:671px" width="18" height="18"><rect x="0.5" y="0.5" width="17" height="17" rx="1" fill="#1a1a1a" stroke="#8a8a8a"/></svg>
<svg style="left:283px;top:671px" width="18" height="18"><rect x="0.5" y="0.5" width="17" height="17" rx="1" fill="#1a1a1a" stroke="#8a8a8a"/></svg>
<svg style="left:307px;top:671px" width="18" height="18"><rect x="0.5" y="0.5" width="17" height="17" rx="1" fill="#1a1a1a" stroke="#8a8a8a"/></svg>
<svg style="left:259px;top:671px" width="18" height="18"><path d="M5.5 4.5v9l8-4.5z" fill="#f0f0f0"/></svg>
<svg style="left:283px;top:671px" width="18" height="18"><path d="M5 4.5h3v9h-3zM10 4.5h3v9h-3z" fill="#f0f0f0"/></svg>
<svg style="left:307px;top:671px" width="18" height="18"><rect x="4.5" y="4.5" width="9" height="9" fill="#f0f0f0"/></svg>
<span class="t" style="left:337px;top:673px;font-size:18.5px;line-height:18.5px;color:#ffffff;font-weight:700;transform:scaleX(0.7206);font-family:'Liberation Mono',monospace;">00:00:00:00</span>
<span class="t" style="left:444px;top:673px;font-size:18.5px;line-height:18.5px;color:#7a7a7a;transform:scaleX(0.7206);font-family:'Liberation Mono',monospace;">00:00:00:00</span>
<div style="left:584.3px;top:674px;width:1.6px;height:13.5px;background:#f0f0f0;"></div>
<div style="left:627px;top:668px;width:30px;height:24px;background:#2f2f2f;"></div>
<div style="left:667px;top:668px;width:30px;height:24px;background:#2f2f2f;"></div>
<div style="left:702px;top:668px;width:30px;height:24px;background:#2f2f2f;"></div>
<div style="left:737px;top:668px;width:45px;height:24px;background:#2f2f2f;"></div>
<div style="left:787px;top:668px;width:25px;height:24px;background:#2f2f2f;"></div>
<div style="left:817px;top:668px;width:25px;height:24px;background:#2f2f2f;"></div>
<div style="left:852px;top:668px;width:25px;height:24px;background:#2f2f2f;"></div>
<div style="left:990px;top:668px;width:25px;height:24px;background:#2f2f2f;"></div>
<div style="left:1025px;top:668px;width:25px;height:24px;background:#2f2f2f;"></div>
<div style="left:1053px;top:668px;width:25px;height:24px;background:#2f2f2f;"></div>
<div style="left:1088px;top:668px;width:25px;height:24px;background:#323232;"></div>
<div style="left:1138px;top:668px;width:25px;height:24px;background:#323232;"></div>
<div style="left:1163px;top:668px;width:25px;height:24px;background:#323232;"></div>
<div style="left:1188px;top:668px;width:25px;height:24px;background:#323232;"></div>
<div style="left:1113px;top:668px;width:25px;height:24px;background:#0079ca;"></div>
<svg style="left:770.3px;top:678.0px" width="7" height="4" viewBox="0 0 7 4"><path d="M0 0h7l-3.5 4z" fill="#6a6a6a"/></svg>
<div style="left:887px;top:679.2px;width:95px;height:3px;background:#8a8a8a;"></div>
<svg style="left:881.5px;top:675.5px" width="11" height="11"><circle cx="5.5" cy="5.5" r="5.5" fill="#ffffff"/></svg>
<div style="left:1287px;top:669px;width:100px;height:22px;background:#333333;"></div>
<span class="t" style="left:1291px;top:675px;font-size:12.5px;line-height:12.5px;color:#ffffff;transform:scaleX(0.9421);">Programmer1</span>
<svg style="left:1375.5px;top:678.0px" width="7" height="4" viewBox="0 0 7 4"><path d="M0 0h7l-3.5 4z" fill="#8a8a8a"/></svg>
<span class="t" style="left:1395px;top:675px;font-size:12.5px;line-height:12.5px;color:#ffffff;transform:scaleX(0.8933);">PME1 Live</span>
<svg style="left:1479.0px;top:678.0px" width="7" height="4" viewBox="0 0 7 4"><path d="M0 0h7l-3.5 4z" fill="#8a8a8a"/></svg>
<div style="left:1494px;top:669px;width:25px;height:22px;background:#333333;"></div>
<svg style="left:6px;top:695px" width="1516" height="30" viewBox="6 695 1516 30"><rect x="6" y="724" width="1516" height="1" fill="#6e6e6e"/><rect x="5.00" y="695" width="2" height="15" fill="#4e4e4e"/><rect x="5.00" y="710" width="2" height="15" fill="#7c7c7c"/><rect x="10.47" y="715" width="1.2" height="10" fill="#747474"/><rect x="15.54" y="715" width="1.2" height="10" fill="#747474"/><rect x="20.61" y="715" width="1.2" height="10" fill="#747474"/><rect x="25.68" y="715" width="1.2" height="10" fill="#747474"/><rect x="30.75" y="710" width="1.2" height="15" fill="#8a8a8a"/><rect x="35.82" y="715" width="1.2" height="10" fill="#747474"/><rect x="40.89" y="715" width="1.2" height="10" fill="#747474"/><rect x="45.96" y="715" width="1.2" height="10" fill="#747474"/><rect x="51.03" y="715" width="1.2" height="10" fill="#747474"/><rect x="56.10" y="710" width="1.2" height="15" fill="#8a8a8a"/><rect x="61.17" y="715" width="1.2" height="10" fill="#747474"/><rect x="66.24" y="715" width="1.2" height="10" fill="#747474"/><rect x="71.31" y="715" width="1.2" height="10" fill="#747474"/><rect x="76.38" y="715" width="1.2" height="10" fill="#747474"/><rect x="81.05" y="695" width="2" height="15" fill="#4e4e4e"/><rect x="81.05" y="710" width="2" height="15" fill="#7c7c7c"/><rect x="86.52" y="715" width="1.2" height="10" fill="#747474"/><rect x="91.59" y="715" width="1.2" height="10" fill="#747474"/><rect x="96.66" y="715" width="1.2" height="10" fill="#747474"/><rect x="101.73" y="715" width="1.2" height="10" fill="#747474"/><rect x="106.80" y="710" width="1.2" height="15" fill="#8a8a8a"/><rect x="111.87" y="715" width="1.2" height="10" fill="#747474"/><rect x="116.94" y="715" width="1.2" height="10" fill="#747474"/><rect x="122.01" y="715" width="1.2" height="10" fill="#747474"/><rect x="127.08" y="715" width="1.2" height="10" fill="#747474"/><rect x="132.15" y="710" width="1.2" height="15" fill="#8a8a8a"/><rect x="137.22" y="715" width="1.2" height="10" fill="#747474"/><rect x="142.29" y="715" width="1.2" height="10" fill="#747474"/><rect x="147.36" y="715" width="1.2" height="10" fill="#747474"/><rect x="152.43" y="715" width="1.2" height="10" fill="#747474"/><rect x="157.10" y="695" width="2" height="15" fill="#4e4e4e"/><rect x="157.10" y="710" width="2" height="15" fill="#7c7c7c"/><rect x="162.57" y="715" width="1.2" height="10" fill="#747474"/><rect x="167.64" y="715" width="1.2" height="10" fill="#747474"/><rect x="172.71" y="715" width="1.2" height="10" fill="#747474"/><rect x="177.78" y="715" width="1.2" height="10" fill="#747474"/><rect x="182.85" y="710" width="1.2" height="15" fill="#8a8a8a"/><rect x="187.92" y="715" width="1.2" height="10" fill="#747474"/><rect x="192.99" y="715" width="1.2" height="10" fill="#747474"/><rect x="198.06" y="715" width="1.2" height="10" fill="#747474"/><rect x="203.13" y="715" width="1.2" height="10" fill="#747474"/><rect x="208.20" y="710" width="1.2" height="15" fill="#8a8a8a"/><rect x="213.27" y="715" width="1.2" height="10" fill="#747474"/><rect x="218.34" y="715" width="1.2" height="10" fill="#747474"/><rect x="223.41" y="715" width="1.2" height="10" fill="#747474"/><rect x="228.48" y="715" width="1.2" height="10" fill="#747474"/><rect x="233.15" y="695" width="2" height="15" fill="#4e4e4e"/><rect x="233.15" y="710" width="2" height="15" fill="#7c7c7c"/><rect x="238.62" y="715" width="1.2" height="10" fill="#747474"/><rect x="243.69" y="715" width="1.2" height="10" fill="#747474"/><rect x="248.76" y="715" width="1.2" height="10" fill="#747474"/><rect x="253.83" y="715" width="1.2" height="10" fill="#747474"/><rect x="258.90" y="710" width="1.2" height="15" fill="#8a8a8a"/><rect x="263.97" y="715" width="1.2" height="10" fill="#747474"/><rect x="269.04" y="715" width="1.2" height="10" fill="#747474"/><rect x="274.11" y="715" width="1.2" height="10" fill="#747474"/><rect x="279.18" y="715" width="1.2" height="10" fill="#747474"/><rect x="284.25" y="710" width="1.2" height="15" fill="#8a8a8a"/><rect x="289.32" y="715" width="1.2" height="10" fill="#747474"/><rect x="294.39" y="715" width="1.2" height="10" fill="#747474"/><rect x="299.46" y="715" width="1.2" height="10" fill="#747474"/><rect x="304.53" y="715" width="1.2" height="10" fill="#747474"/><rect x="309.20" y="695" width="2" height="15" fill="#4e4e4e"/><rect x="309.20" y="710" width="2" height="15" fill="#7c7c7c"/><rect x="314.67" y="715" width="1.2" height="10" fill="#747474"/><rect x="319.74" y="715" width="1.2" height="10" fill="#747474"/><rect x="324.81" y="715" width="1.2" height="10" fill="#747474"/><rect x="329.88" y="715" width="1.2" height="10" fill="#747474"/><rect x="334.95" y="710" width="1.2" height="15" fill="#8a8a8a"/><rect x="340.02" y="715" width="1.2" height="10" fill="#747474"/><rect x="345.09" y="715" width="1.2" height="10" fill="#747474"/><rect x="350.16" y="715" width="1.2" height="10" fill="#747474"/><rect x="355.23" y="715" width="1.2" height="10" fill="#747474"/><rect x="360.30" y="710" width="1.2" height="15" fill="#8a8a8a"/><rect x="365.37" y="715" width="1.2" height="10" fill="#747474"/><rect x="370.44" y="715" width="1.2" height="10" fill="#747474"/><rect x="375.51" y="715" width="1.2" height="10" fill="#747474"/><rect x="380.58" y="715" width="1.2" height="10" fill="#747474"/><rect x="385.25" y="695" width="2" height="15" fill="#4e4e4e"/><rect x="385.25" y="710" width="2" height="15" fill="#7c7c7c"/><rect x="390.72" y="715" width="1.2" height="10" fill="#747474"/><rect x="395.79" y="715" width="1.2" height="10" fill="#747474"/><rect x="400.86" y="715" width="1.2" height="10" fill="#747474"/><rect x="405.93" y="715" width="1.2" height="10" fill="#747474"/><rect x="411.00" y="710" width="1.2" height="15" fill="#8a8a8a"/><rect x="416.07" y="715" width="1.2" height="10" fill="#747474"/><rect x="421.14" y="715" width="1.2" height="10" fill="#747474"/><rect x="426.21" y="715" width="1.2" height="10" fill="#747474"/><rect x="431.28" y="715" width="1.2" height="10" fill="#747474"/><rect x="436.35" y="710" width="1.2" height="15" fill="#8a8a8a"/><rect x="441.42" y="715" width="1.2" height="10" fill="#747474"/><rect x="446.49" y="715" width="1.2" height="10" fill="#747474"/><rect x="451.56" y="715" width="1.2" height="10" fill="#747474"/><rect x="456.63" y="715" width="1.2" height="10" fill="#747474"/><rect x="461.30" y="695" width="2" height="15" fill="#4e4e4e"/><rect x="461.30" y="710" width="2" height="15" fill="#7c7c7c"/><rect x="466.77" y="715" width="1.2" height="10" fill="#747474"/><rect x="471.84" y="715" width="1.2" height="10" fill="#747474"/><rect x="476.91" y="715" width="1.2" height="10" fill="#747474"/><rect x="481.98" y="715" width="1.2" height="10" fill="#747474"/><rect x="487.05" y="710" width="1.2" height="15" fill="#8a8a8a"/><rect x="492.12" y="715" width="1.2" height="10" fill="#747474"/><rect x="497.19" y="715" width="1.2" height="10" fill="#747474"/><rect x="502.26" y="715" width="1.2" height="10" fill="#747474"/><rect x="507.33" y="715" width="1.2" height="10" fill="#747474"/><rect x="512.40" y="710" width="1.2" height="15" fill="#8a8a8a"/><rect x="517.47" y="715" width="1.2" height="10" fill="#747474"/><rect x="522.54" y="715" width="1.2" height="10" fill="#747474"/><rect x="527.61" y="715" width="1.2" height="10" fill="#747474"/><rect x="532.68" y="715" width="1.2" height="10" fill="#747474"/><rect x="537.35" y="695" width="2" height="15" fill="#4e4e4e"/><rect x="537.35" y="710" width="2" height="15" fill="#7c7c7c"/><rect x="542.82" y="715" width="1.2" height="10" fill="#747474"/><rect x="547.89" y="715" width="1.2" height="10" fill="#747474"/><rect x="552.96" y="715" width="1.2" height="10" fill="#747474"/><rect x="558.03" y="715" width="1.2" height="10" fill="#747474"/><rect x="563.10" y="710" width="1.2" height="15" fill="#8a8a8a"/><rect x="568.17" y="715" width="1.2" height="10" fill="#747474"/><rect x="573.24" y="715" width="1.2" height="10" fill="#747474"/><rect x="578.31" y="715" width="1.2" height="10" fill="#747474"/><rect x="583.38" y="715" width="1.2" height="10" fill="#747474"/><rect x="588.45" y="710" width="1.2" height="15" fill="#8a8a8a"/><rect x="593.52" y="715" width="1.2" height="10" fill="#747474"/><rect x="598.59" y="715" width="1.2" height="10" fill="#747474"/><rect x="603.66" y="715" width="1.2" height="10" fill="#747474"/><rect x="608.73" y="715" width="1.2" height="10" fill="#747474"/><rect x="613.40" y="695" width="2" height="15" fill="#4e4e4e"/><rect x="613.40" y="710" width="2" height="15" fill="#7c7c7c"/><rect x="618.87" y="715" width="1.2" height="10" fill="#747474"/><rect x="623.94" y="715" width="1.2" height="10" fill="#747474"/><rect x="629.01" y="715" width="1.2" height="10" fill="#747474"/><rect x="634.08" y="715" width="1.2" height="10" fill="#747474"/><rect x="639.15" y="710" width="1.2" height="15" fill="#8a8a8a"/><rect x="644.22" y="715" width="1.2" height="10" fill="#747474"/><rect x="649.29" y="715" width="1.2" height="10" fill="#747474"/><rect x="654.36" y="715" width="1.2" height="10" fill="#747474"/><rect x="659.43" y="715" width="1.2" height="10" fill="#747474"/><rect x="664.50" y="710" width="1.2" height="15" fill="#8a8a8a"/><rect x="669.57" y="715" width="1.2" height="10" fill="#747474"/><rect x="674.64" y="715" width="1.2" height="10" fill="#747474"/><rect x="679.71" y="715" width="1.2" height="10" fill="#747474"/><rect x="684.78" y="715" width="1.2" height="10" fill="#747474"/><rect x="689.45" y="695" width="2" height="15" fill="#4e4e4e"/><rect x="689.45" y="710" width="2" height="15" fill="#7c7c7c"/><rect x="694.92" y="715" width="1.2" height="10" fill="#747474"/><rect x="699.99" y="715" width="1.2" height="10" fill="#747474"/><rect x="705.06" y="715" width="1.2" height="10" fill="#747474"/><rect x="710.13" y="715" width="1.2" height="10" fill="#747474"/><rect x="715.20" y="710" width="1.2" height="15" fill="#8a8a8a"/><rect x="720.27" y="715" width="1.2" height="10" fill="#747474"/><rect x="725.34" y="715" width="1.2" height="10" fill="#747474"/><rect x="730.41" y="715" width="1.2" height="10" fill="#747474"/><rect x="735.48" y="715" width="1.2" height="10" fill="#747474"/><rect x="740.55" y="710" width="1.2" height="15" fill="#8a8a8a"/><rect x="745.62" y="715" width="1.2" height="10" fill="#747474"/><rect x="750.69" y="715" width="1.2" height="10" fill="#747474"/><rect x="755.76" y="715" width="1.2" height="10" fill="#747474"/><rect x="760.83" y="715" width="1.2" height="10" fill="#747474"/><rect x="765.50" y="695" width="2" height="15" fill="#4e4e4e"/><rect x="765.50" y="710" width="2" height="15" fill="#7c7c7c"/><rect x="770.97" y="715" width="1.2" height="10" fill="#747474"/><rect x="776.04" y="715" width="1.2" height="10" fill="#747474"/><rect x="781.11" y="715" width="1.2" height="10" fill="#747474"/><rect x="786.18" y="715" width="1.2" height="10" fill="#747474"/><rect x="791.25" y="710" width="1.2" height="15" fill="#8a8a8a"/><rect x="796.32" y="715" width="1.2" height="10" fill="#747474"/><rect x="801.39" y="715" width="1.2" height="10" fill="#747474"/><rect x="806.46" y="715" width="1.2" height="10" fill="#747474"/><rect x="811.53" y="715" width="1.2" height="10" fill="#747474"/><rect x="816.60" y="710" width="1.2" height="15" fill="#8a8a8a"/><rect x="821.67" y="715" width="1.2" height="10" fill="#747474"/><rect x="826.74" y="715" width="1.2" height="10" fill="#747474"/><rect x="831.81" y="715" width="1.2" height="10" fill="#747474"/><rect x="836.88" y="715" width="1.2" height="10" fill="#747474"/><rect x="841.55" y="695" width="2" height="15" fill="#4e4e4e"/><rect x="841.55" y="710" width="2" height="15" fill="#7c7c7c"/><rect x="847.02" y="715" width="1.2" height="10" fill="#747474"/><rect x="852.09" y="715" width="1.2" height="10" fill="#747474"/><rect x="857.16" y="715" width="1.2" height="10" fill="#747474"/><rect x="862.23" y="715" width="1.2" height="10" fill="#747474"/><rect x="867.30" y="710" width="1.2" height="15" fill="#8a8a8a"/><rect x="872.37" y="715" width="1.2" height="10" fill="#747474"/><rect x="877.44" y="715" width="1.2" height="10" fill="#747474"/><rect x="882.51" y="715" width="1.2" height="10" fill="#747474"/><rect x="887.58" y="715" width="1.2" height="10" fill="#747474"/><rect x="892.65" y="710" width="1.2" height="15" fill="#8a8a8a"/><rect x="897.72" y="715" width="1.2" height="10" fill="#747474"/><rect x="902.79" y="715" width="1.2" height="10" fill="#747474"/><rect x="907.86" y="715" width="1.2" height="10" fill="#747474"/><rect x="912.93" y="715" width="1.2" height="10" fill="#747474"/><rect x="917.60" y="695" width="2" height="15" fill="#4e4e4e"/><rect x="917.60" y="710" width="2" height="15" fill="#7c7c7c"/><rect x="923.07" y="715" width="1.2" height="10" fill="#747474"/><rect x="928.14" y="715" width="1.2" height="10" fill="#747474"/><rect x="933.21" y="715" width="1.2" height="10" fill="#747474"/><rect x="938.28" y="715" width="1.2" height="10" fill="#747474"/><rect x="943.35" y="710" width="1.2" height="15" fill="#8a8a8a"/><rect x="948.42" y="715" width="1.2" height="10" fill="#747474"/><rect x="953.49" y="715" width="1.2" height="10" fill="#747474"/><rect x="958.56" y="715" width="1.2" height="10" fill="#747474"/><rect x="963.63" y="715" width="1.2" height="10" fill="#747474"/><rect x="968.70" y="710" width="1.2" height="15" fill="#8a8a8a"/><rect x="973.77" y="715" width="1.2" height="10" fill="#747474"/><rect x="978.84" y="715" width="1.2" height="10" fill="#747474"/><rect x="983.91" y="715" width="1.2" height="10" fill="#747474"/><rect x="988.98" y="715" width="1.2" height="10" fill="#747474"/><rect x="993.65" y="695" width="2" height="15" fill="#4e4e4e"/><rect x="993.65" y="710" width="2" height="15" fill="#7c7c7c"/><rect x="999.12" y="715" width="1.2" height="10" fill="#747474"/><rect x="1004.19" y="715" width="1.2" height="10" fill="#747474"/><rect x="1009.26" y="715" width="1.2" height="10" fill="#747474"/><rect x="1014.33" y="715" width="1.2" height="10" fill="#747474"/><rect x="1019.40" y="710" width="1.2" height="15" fill="#8a8a8a"/><rect x="1024.47" y="715" width="1.2" height="10" fill="#747474"/><rect x="1029.54" y="715" width="1.2" height="10" fill="#747474"/><rect x="1034.61" y="715" width="1.2" height="10" fill="#747474"/><rect x="1039.68" y="715" width="1.2" height="10" fill="#747474"/><rect x="1044.75" y="710" width="1.2" height="15" fill="#8a8a8a"/><rect x="1049.82" y="715" width="1.2" height="10" fill="#747474"/><rect x="1054.89" y="715" width="1.2" height="10" fill="#747474"/><rect x="1059.96" y="715" width="1.2" height="10" fill="#747474"/><rect x="1065.03" y="715" width="1.2" height="10" fill="#747474"/><rect x="1069.70" y="695" width="2" height="15" fill="#4e4e4e"/><rect x="1069.70" y="710" width="2" height="15" fill="#7c7c7c"/><rect x="1075.17" y="715" width="1.2" height="10" fill="#747474"/><rect x="1080.24" y="715" width="1.2" height="10" fill="#747474"/><rect x="1085.31" y="715" width="1.2" height="10" fill="#747474"/><rect x="1090.38" y="715" width="1.2" height="10" fill="#747474"/><rect x="1095.45" y="710" width="1.2" height="15" fill="#8a8a8a"/><rect x="1100.52" y="715" width="1.2" height="10" fill="#747474"/><rect x="1105.59" y="715" width="1.2" height="10" fill="#747474"/><rect x="1110.66" y="715" width="1.2" height="10" fill="#747474"/><rect x="1115.73" y="715" width="1.2" height="10" fill="#747474"/><rect x="1120.80" y="710" width="1.2" height="15" fill="#8a8a8a"/><rect x="1125.87" y="715" width="1.2" height="10" fill="#747474"/><rect x="1130.94" y="715" width="1.2" height="10" fill="#747474"/><rect x="1136.01" y="715" width="1.2" height="10" fill="#747474"/><rect x="1141.08" y="715" width="1.2" height="10" fill="#747474"/><rect x="1145.75" y="695" width="2" height="15" fill="#4e4e4e"/><rect x="1145.75" y="710" width="2" height="15" fill="#7c7c7c"/><rect x="1151.22" y="715" width="1.2" height="10" fill="#747474"/><rect x="1156.29" y="715" width="1.2" height="10" fill="#747474"/><rect x="1161.36" y="715" width="1.2" height="10" fill="#747474"/><rect x="1166.43" y="715" width="1.2" height="10" fill="#747474"/><rect x="1171.50" y="710" width="1.2" height="15" fill="#8a8a8a"/><rect x="1176.57" y="715" width="1.2" height="10" fill="#747474"/><rect x="1181.64" y="715" width="1.2" height="10" fill="#747474"/><rect x="1186.71" y="715" width="1.2" height="10" fill="#747474"/><rect x="1191.78" y="715" width="1.2" height="10" fill="#747474"/><rect x="1196.85" y="710" width="1.2" height="15" fill="#8a8a8a"/><rect x="1201.92" y="715" width="1.2" height="10" fill="#747474"/><rect x="1206.99" y="715" width="1.2" height="10" fill="#747474"/><rect x="1212.06" y="715" width="1.2" height="10" fill="#747474"/><rect x="1217.13" y="715" width="1.2" height="10" fill="#747474"/><rect x="1221.80" y="695" width="2" height="15" fill="#4e4e4e"/><rect x="1221.80" y="710" width="2" height="15" fill="#7c7c7c"/><rect x="1227.27" y="715" width="1.2" height="10" fill="#747474"/><rect x="1232.34" y="715" width="1.2" height="10" fill="#747474"/><rect x="1237.41" y="715" width="1.2" height="10" fill="#747474"/><rect x="1242.48" y="715" width="1.2" height="10" fill="#747474"/><rect x="1247.55" y="710" width="1.2" height="15" fill="#8a8a8a"/><rect x="1252.62" y="715" width="1.2" height="10" fill="#747474"/><rect x="1257.69" y="715" width="1.2" height="10" fill="#747474"/><rect x="1262.76" y="715" width="1.2" height="10" fill="#747474"/><rect x="1267.83" y="715" width="1.2" height="10" fill="#747474"/><rect x="1272.90" y="710" width="1.2" height="15" fill="#8a8a8a"/><rect x="1277.97" y="715" width="1.2" height="10" fill="#747474"/><rect x="1283.04" y="715" width="1.2" height="10" fill="#747474"/><rect x="1288.11" y="715" width="1.2" height="10" fill="#747474"/><rect x="1293.18" y="715" width="1.2" height="10" fill="#747474"/><rect x="1297.85" y="695" width="2" height="15" fill="#4e4e4e"/><rect x="1297.85" y="710" width="2" height="15" fill="#7c7c7c"/><rect x="1303.32" y="715" width="1.2" height="10" fill="#747474"/><rect x="1308.39" y="715" width="1.2" height="10" fill="#747474"/><rect x="1313.46" y="715" width="1.2" height="10" fill="#747474"/><rect x="1318.53" y="715" width="1.2" height="10" fill="#747474"/><rect x="1323.60" y="710" width="1.2" height="15" fill="#8a8a8a"/><rect x="1328.67" y="715" width="1.2" height="10" fill="#747474"/><rect x="1333.74" y="715" width="1.2" height="10" fill="#747474"/><rect x="1338.81" y="715" width="1.2" height="10" fill="#747474"/><rect x="1343.88" y="715" width="1.2" height="10" fill="#747474"/><rect x="1348.95" y="710" width="1.2" height="15" fill="#8a8a8a"/><rect x="1354.02" y="715" width="1.2" height="10" fill="#747474"/><rect x="1359.09" y="715" width="1.2" height="10" fill="#747474"/><rect x="1364.16" y="715" width="1.2" height="10" fill="#747474"/><rect x="1369.23" y="715" width="1.2" height="10" fill="#747474"/><rect x="1373.90" y="695" width="2" height="15" fill="#4e4e4e"/><rect x="1373.90" y="710" width="2" height="15" fill="#7c7c7c"/><rect x="1379.37" y="715" width="1.2" height="10" fill="#747474"/><rect x="1384.44" y="715" width="1.2" height="10" fill="#747474"/><rect x="1389.51" y="715" width="1.2" height="10" fill="#747474"/><rect x="1394.58" y="715" width="1.2" height="10" fill="#747474"/><rect x="1399.65" y="710" width="1.2" height="15" fill="#8a8a8a"/><rect x="1404.72" y="715" width="1.2" height="10" fill="#747474"/><rect x="1409.79" y="715" width="1.2" height="10" fill="#747474"/><rect x="1414.86" y="715" width="1.2" height="10" fill="#747474"/><rect x="1419.93" y="715" width="1.2" height="10" fill="#747474"/><rect x="1425.00" y="710" width="1.2" height="15" fill="#8a8a8a"/><rect x="1430.07" y="715" width="1.2" height="10" fill="#747474"/><rect x="1435.14" y="715" width="1.2" height="10" fill="#747474"/><rect x="1440.21" y="715" width="1.2" height="10" fill="#747474"/><rect x="1445.28" y="715" width="1.2" height="10" fill="#747474"/><rect x="1449.95" y="695" width="2" height="15" fill="#4e4e4e"/><rect x="1449.95" y="710" width="2" height="15" fill="#7c7c7c"/><rect x="1455.42" y="715" width="1.2" height="10" fill="#747474"/><rect x="1460.49" y="715" width="1.2" height="10" fill="#747474"/><rect x="1465.56" y="715" width="1.2" height="10" fill="#747474"/><rect x="1470.63" y="715" width="1.2" height="10" fill="#747474"/><rect x="1475.70" y="710" width="1.2" height="15" fill="#8a8a8a"/><rect x="1480.77" y="715" width="1.2" height="10" fill="#747474"/><rect x="1485.84" y="715" width="1.2" height="10" fill="#747474"/><rect x="1490.91" y="715" width="1.2" height="10" fill="#747474"/><rect x="1495.98" y="715" width="1.2" height="10" fill="#747474"/><rect x="1501.05" y="710" width="1.2" height="15" fill="#8a8a8a"/><rect x="1506.12" y="715" width="1.2" height="10" fill="#747474"/><rect x="1511.19" y="715" width="1.2" height="10" fill="#747474"/><rect x="1516.26" y="715" width="1.2" height="10" fill="#747474"/></svg>
<span class="t" style="left:8.25px;top:697px;font-size:11.5px;line-height:11.5px;color:#f0f0f0;transform:scaleX(1.1118);">00:00</span>
<span class="t" style="left:84.3px;top:697px;font-size:11.5px;line-height:11.5px;color:#f0f0f0;transform:scaleX(1.1118);">00:15</span>
<span class="t" style="left:160.35px;top:697px;font-size:11.5px;line-height:11.5px;color:#f0f0f0;transform:scaleX(1.1118);">00:30</span>
<span class="t" style="left:236.39999999999998px;top:697px;font-size:11.5px;line-height:11.5px;color:#f0f0f0;transform:scaleX(1.1118);">00:45</span>
<span class="t" style="left:312.45px;top:697px;font-size:11.5px;line-height:11.5px;color:#f0f0f0;transform:scaleX(1.1118);">01:00</span>
<span class="t" style="left:388.5px;top:697px;font-size:11.5px;line-height:11.5px;color:#f0f0f0;transform:scaleX(1.1118);">01:15</span>
<span class="t" style="left:464.54999999999995px;top:697px;font-size:11.5px;line-height:11.5px;color:#f0f0f0;transform:scaleX(1.1118);">01:30</span>
<span class="t" style="left:540.6px;top:697px;font-size:11.5px;line-height:11.5px;color:#f0f0f0;transform:scaleX(1.1118);">01:45</span>
<span class="t" style="left:616.65px;top:697px;font-size:11.5px;line-height:11.5px;color:#f0f0f0;transform:scaleX(1.1118);">02:00</span>
<span class="t" style="left:692.6999999999999px;top:697px;font-size:11.5px;line-height:11.5px;color:#f0f0f0;transform:scaleX(1.1118);">02:15</span>
<span class="t" style="left:768.75px;top:697px;font-size:11.5px;line-height:11.5px;color:#f0f0f0;transform:scaleX(1.1118);">02:30</span>
<span class="t" style="left:844.8px;top:697px;font-size:11.5px;line-height:11.5px;color:#f0f0f0;transform:scaleX(1.1118);">02:45</span>
<span class="t" style="left:920.8499999999999px;top:697px;font-size:11.5px;line-height:11.5px;color:#f0f0f0;transform:scaleX(1.1118);">03:00</span>
<span class="t" style="left:996.9px;top:697px;font-size:11.5px;line-height:11.5px;color:#f0f0f0;transform:scaleX(1.1118);">03:15</span>
<span class="t" style="left:1072.95px;top:697px;font-size:11.5px;line-height:11.5px;color:#f0f0f0;transform:scaleX(1.1118);">03:30</span>
<span class="t" style="left:1149.0px;top:697px;font-size:11.5px;line-height:11.5px;color:#f0f0f0;transform:scaleX(1.1118);">03:45</span>
<span class="t" style="left:1225.05px;top:697px;font-size:11.5px;line-height:11.5px;color:#f0f0f0;transform:scaleX(1.1118);">04:00</span>
<span class="t" style="left:1301.1px;top:697px;font-size:11.5px;line-height:11.5px;color:#f0f0f0;transform:scaleX(1.1118);">04:15</span>
<span class="t" style="left:1377.1499999999999px;top:697px;font-size:11.5px;line-height:11.5px;color:#f0f0f0;transform:scaleX(1.1118);">04:30</span>
<span class="t" style="left:1453.2px;top:697px;font-size:11.5px;line-height:11.5px;color:#f0f0f0;transform:scaleX(1.1118);">04:45</span>
<div style="left:5.9px;top:710px;width:1.5px;height:328px;background:#2490fa;"></div>
<svg style="left:6px;top:710px" width="7" height="10"><path d="M0 0h6.5L0 9.5z" fill="#2490fa"/></svg>
<div style="left:23px;top:1042px;width:739px;height:9px;background:#303030;"></div>
<svg style="left:11px;top:1041px" width="6" height="10"><path d="M6 0v10L0 5z" fill="#9a9a9a"/></svg>
<svg style="left:1511px;top:1041px" width="6" height="10"><path d="M0 0v10L6 5z" fill="#9a9a9a"/></svg>
<span class="t" style="left:1143.8px;top:63px;font-size:9.5px;line-height:9.5px;color:#c4c4c4;transform:scaleX(0.8710);">UV</span>
<svg style="left:0;top:0" width="1920" height="1080" viewBox="0 0 1920 1080"><path d="M16.6 675.6a6 6 0 1 0 7.8 0" fill="none" stroke="#f0f0f0" stroke-width="1.7" stroke-linecap="round"/><path d="M20.5 673v7" fill="none" stroke="#f0f0f0" stroke-width="1.7" stroke-linecap="round"/><path d="M635.6 675.2h13.2v6.6l-6.6 5.6l-6.6-5.6z" fill="none" stroke="#f0f0f0" stroke-width="1.3" stroke-linejoin="round"/><path d="M642.2 677.2v5.2M639.6 679.8h5.2" fill="none" stroke="#f0f0f0" stroke-width="1.2" /><path d="M674.2 677.4h6.4v3.6l-3.2 3.6l-3.2-3.6z" fill="none" stroke="#f0f0f0" stroke-width="1.2" /><path d="M689 675.6v10.4l-6.6-5.2z" fill="#f0f0f0"/><path d="M710.4 675.6v10.4l6.6-5.2z" fill="#f0f0f0"/><path d="M718.6 677.4h6.4v3.6l-3.2 3.6l-3.2-3.6z" fill="none" stroke="#f0f0f0" stroke-width="1.2" /><path d="M793.4 680.8h4" fill="none" stroke="#f0f0f0" stroke-width="1.4" /><path d="M796.6 677.8l3.4 3l-3.4 3z" fill="#f0f0f0"/><path d="M801.6 677.6h6v3.6l-3 3.4l-3-3.4z" fill="none" stroke="#f0f0f0" stroke-width="1.2" /><path d="M822.4 676.2h2.6c3.4 0 5 9.4 8.6 9.4h2M822.4 685.6h2.6c1.4 0 2.2-1.4 3-3M831.2 679c0.8-1.6 1.6-2.8 2.6-2.8h2" fill="none" stroke="#f0f0f0" stroke-width="1.4" /><path d="M835.4 673.2l3.6 3l-3.6 3z" fill="#f0f0f0"/><path d="M835.4 682.6l3.6 3l-3.6 3z" fill="#f0f0f0"/><path d="M857 686.8l5.6-9.4l3.6 5.8l1.8-2.6l4.4 6.2z" fill="#e0e0e0"/><circle cx="870.1" cy="677.3" r="1.6" fill="#e0e0e0"/><path d="M999 674.2l1.6 1.8l1.6-1.8h1.6l1.6 1.8l1.6-1.8v5a4 4 0 0 1-8 0z" fill="#e0e0e0"/><rect x="1002.3" y="682.6" width="1.4" height="5.2" fill="#e0e0e0"/><path d="M995.8 681.4c3.6 0 5.8 2.6 5.8 6.4h-2.4c-2.4 0-3.4-3-3.4-6.4z" fill="#e0e0e0"/><path d="M1010.4 681.4c-3.6 0-5.8 2.6-5.8 6.4h2.4c2.4 0 3.4-3 3.4-6.4z" fill="#e0e0e0"/><path d="M1032.2 678.4v-2.2h2.6M1041.2 676.2h2.6v2.2M1043.8 682.8v2.2h-2.6M1034.8 685h-2.6v-2.2" fill="none" stroke="#f0f0f0" stroke-width="1.1" /><rect x="1034.2" y="677.8" width="7.6" height="5.6" fill="#e0e0e0"/><path d="M1058.6 677.6v-3h3.4M1069.2 674.6h3.4v3M1072.6 683.6v3h-3.4M1062 686.6h-3.4v-3" fill="none" stroke="#f0f0f0" stroke-width="1.2" /><rect x="1061.4" y="677.9" width="8" height="5.2" fill="#e0e0e0"/><circle cx="1101" cy="680.6" r="2.1" fill="#f0f0f0"/><path d="M1097.6 677.2v6.8l-3.2-3.4zM1104.4 677.2v6.8l3.2-3.4z" fill="none" stroke="#f0f0f0" stroke-width="0.9" /><rect x="1119" y="674.2" width="12.2" height="3.7" fill="#ece4dc"/><rect x="1121" y="679.3" width="12.2" height="3.7" fill="#ece4dc"/><rect x="1119" y="684.4" width="12.2" height="3.7" fill="#ece4dc"/><rect x="1144" y="673.9" width="7.5" height="1.7" fill="#f0f0f0"/><rect x="1144" y="677.1" width="6" height="1.7" fill="#f0f0f0"/><rect x="1144" y="680.3" width="7.5" height="1.7" fill="#f0f0f0"/><rect x="1144" y="683.3" width="14" height="1.7" fill="#f0f0f0"/><rect x="1144" y="686.4" width="14" height="1.7" fill="#f0f0f0"/><rect x="1154.1" y="675" width="1.8" height="6.2" fill="#f0f0f0"/><rect x="1151.9" y="677.2" width="6.2" height="1.8" fill="#f0f0f0"/><rect x="1169" y="673.9" width="14" height="1.7" fill="#f0f0f0"/><rect x="1169" y="677.1" width="14" height="1.7" fill="#f0f0f0"/><rect x="1169" y="680.3" width="8" height="1.7" fill="#f0f0f0"/><rect x="1169" y="683.3" width="7" height="1.7" fill="#f0f0f0"/><rect x="1169" y="686.4" width="8" height="1.7" fill="#f0f0f0"/><rect x="1179.1" y="681.3" width="1.8" height="6.2" fill="#f0f0f0"/><rect x="1176.9" y="683.5" width="6.2" height="1.8" fill="#f0f0f0"/><path d="M1198.4 673.6c1.6 0 2.6 0.6 2.6 2v10.8c0 1.4-1 2-2.6 2M1203.6 673.6c-1.6 0-2.6 0.6-2.6 2M1203.6 688.4c-1.6 0-2.6-0.6-2.6-2" fill="none" stroke="#f0f0f0" stroke-width="1.3" /><path d="M1198 676.4h-4.6v9.4h4.6M1204 676.4h4v9.4h-4" fill="none" stroke="#d0d0d0" stroke-width="1" stroke-dasharray="1.6 1.4"/><path d="M1501 71.4h5.2" fill="none" stroke="#f0f0f0" stroke-width="1.4" /><path d="M1506.6 67.4v8" fill="none" stroke="#f0f0f0" stroke-width="1.5" /><rect x="1507.6" y="68.30000000000001" width="5.8" height="6.2" fill="none" stroke="#f0f0f0" stroke-width="1.2"/><rect x="1507.6" y="72.0" width="5.8" height="2.5" fill="#f0f0f0"/><path d="M1784.3 68.6h5.2" fill="none" stroke="#f0f0f0" stroke-width="1.4" /><path d="M1789.8999999999999 64.6v8" fill="none" stroke="#f0f0f0" stroke-width="1.5" /><rect x="1790.8999999999999" y="65.5" width="5.8" height="6.2" fill="none" stroke="#f0f0f0" stroke-width="1.2"/><rect x="1790.8999999999999" y="69.19999999999999" width="5.8" height="2.5" fill="#f0f0f0"/><path d="M1501 681.4h5.2" fill="none" stroke="#f0f0f0" stroke-width="1.4" /><path d="M1506.6 677.4v8" fill="none" stroke="#f0f0f0" stroke-width="1.5" /><rect x="1507.6" y="678.3" width="5.8" height="6.2" fill="none" stroke="#f0f0f0" stroke-width="1.2"/><rect x="1507.6" y="682.0" width="5.8" height="2.5" fill="#f0f0f0"/><path d="M962.1 66v10.4M956.8 71.2h10.6" fill="none" stroke="#f0f0f0" stroke-width="2.2" /><path d="M962.1 63.2l3.6 4h-7.2zM962.1 79.2l3.6-4h-7.2zM954.1 71.2l4-3.6v7.2zM970.1 71.2l-4-3.6v7.2z" fill="#f0f0f0"/><circle cx="1088.7" cy="71.5" r="1.3" fill="#474747"/><circle cx="1093.7" cy="67.5" r="1.3" fill="#474747"/><circle cx="1094.3" cy="74.9" r="1.3" fill="#474747"/><path d="M1116.4 68.6l5.6-4.6l-1 7.4z" fill="none" stroke="#c0c0c0" stroke-width="0.9" /><circle cx="1116.4" cy="68.6" r="1.2" fill="#f0f0f0"/><circle cx="1122" cy="64" r="1.2" fill="#f0f0f0"/><circle cx="1121" cy="71.6" r="1.4" fill="#f0f0f0"/><path d="M1117 78h6.6a2.4 2.4 0 0 0 2.2-3.4" fill="none" stroke="#f0f0f0" stroke-width="1.4" /><path d="M1118.4 74.8l-4.2 3.2l4.2 3.2z" fill="#f0f0f0"/><path d="M1147.4 76.6h7.6v-3" fill="none" stroke="#f0f0f0" stroke-width="1.4" /><path d="M1148.6 73.4l-4.4 3.2l4.4 3.2z" fill="#f0f0f0"/><rect x="1172.4" y="64.6" width="12.6" height="12.6" fill="none" stroke="#e0e0e0" stroke-width="1.1" stroke-dasharray="1.1 1.1"/><path d="M1175.2 68.8l6.6-1l0.8 6.6h-7.6z" fill="none" stroke="#e0e0e0" stroke-width="1" /><circle cx="1175.2" cy="68.8" r="1.2" fill="#f0f0f0"/><circle cx="1181.8" cy="67.8" r="1.2" fill="#f0f0f0"/><circle cx="1182.6" cy="74.4" r="1.2" fill="#f0f0f0"/><circle cx="1175" cy="74.4" r="1.2" fill="#f0f0f0"/><path d="M1533.4 61.8h11.6M1533.4 74.2h11.6M1532 63.2v9.6M1546.4 63.2v9.6" fill="none" stroke="#e0e0e0" stroke-width="1.3" /><rect x="1531" y="60.8" width="2" height="2" fill="none" stroke="#e0e0e0" stroke-width="0.9"/><rect x="1531" y="73.2" width="2" height="2" fill="none" stroke="#e0e0e0" stroke-width="0.9"/><rect x="1545.4" y="60.8" width="2" height="2" fill="none" stroke="#e0e0e0" stroke-width="0.9"/><rect x="1545.4" y="73.2" width="2" height="2" fill="none" stroke="#e0e0e0" stroke-width="0.9"/><circle cx="1817.5" cy="68.2" r="4.6" fill="none" stroke="#f0f0f0" stroke-width="1.6"/><path d="M1817.5 61.4v4M1817.5 71v4M1810.7 68.2h4M1820.3 68.2h4" fill="none" stroke="#f0f0f0" stroke-width="1.7" /><rect x="1838.8" y="63.4" width="2" height="2" fill="#f0f0f0"/><rect x="1842.4" y="63.4" width="10" height="2" fill="#f0f0f0"/><rect x="1838.8" y="67.2" width="2" height="2" fill="#f0f0f0"/><rect x="1842.4" y="67.2" width="10" height="2" fill="#f0f0f0"/><rect x="1838.8" y="71" width="2" height="2" fill="#f0f0f0"/><rect x="1842.4" y="71" width="10" height="2" fill="#f0f0f0"/><path d="M1873.7 63v12.6" fill="none" stroke="#f0f0f0" stroke-width="1.7" /><path d="M1873.7 60.6l4 5h-8z" fill="#f0f0f0"/><path d="M1901.5 61v12.2" fill="none" stroke="#f0f0f0" stroke-width="1.7" /><path d="M1901.5 75.8l4-5h-8z" fill="#f0f0f0"/><path d="M540.5 216.6v9.2M545.5 216.6v9.2M550.5 216.6v9.2" fill="none" stroke="#f0f0f0" stroke-width="1.2" /><path d="M538.6 218.6h3.8M543.6 223h3.8M548.6 220.4h3.8" fill="none" stroke="#f0f0f0" stroke-width="1.4" /><path d="M540.5 215.4l1.4 1.8h-2.8z" fill="#f0f0f0"/><path d="M1849.4 1066.4h2.4l3.2-2.8v9.6l-3.2-2.8h-2.4z" fill="#d8d8d8"/><path d="M1856.8 1066a3 3 0 0 1 0 4.8M1858.8 1064a5.6 5.6 0 0 1 0 8.8" fill="none" stroke="#d8d8d8" stroke-width="1" /><rect x="1874" y="1062.6" width="13.4" height="9.6" rx="1" fill="none" stroke="#d8d8d8" stroke-width="1.2"/><path d="M1877.6 1064.6v5.6M1880.7 1064.6v5.6M1883.8 1064.6v5.6" fill="none" stroke="#d8d8d8" stroke-width="0.9" /><path d="M1876.4 1068h2.4M1879.5 1066h2.4M1882.6 1067.4h2.4" fill="none" stroke="#d8d8d8" stroke-width="1.1" /><rect x="1880" y="1072.2" width="1.4" height="2.4" fill="#d8d8d8"/><rect x="1877" y="1074.4" width="7.4" height="1.3" fill="#d8d8d8"/><rect x="1899.4" y="1061.6" width="14" height="14" fill="none" stroke="#c0c0c0" stroke-width="1" stroke-dasharray="1 1"/><rect x="1900" y="1069" width="6.4" height="6.4" fill="#e8e8e8"/><path d="M1906 1069.6l5-5" fill="none" stroke="#e8e8e8" stroke-width="1.4" /><path d="M1907.6 1063.4h5v5z" fill="#e8e8e8"/></svg>
<div style="left:108px;top:23px;width:151px;height:578px;background:#262626;box-sizing:border-box;border:1px solid #333333;border-top:none;"></div>
<div style="left:110px;top:71px;width:147px;height:22px;background:#0079ca;"></div>
<span class="t" style="left:144px;top:31px;font-size:12.5px;line-height:12.5px;color:#c8c8c8;transform:scaleX(0.8728);">Canvas</span>
<svg style="left:114px;top:28px" width="16" height="16" viewBox="0 0 16 16"><path d="M2.9 2.4H13.1M2.9 13.6H13.1M1.5 3.9V12.1M14.5 3.9V12.1" fill="none" stroke="#e4e4e4" stroke-width="1.4" /><rect x="0.4" y="1.3" width="2.2" height="2.2" fill="none" stroke="#e4e4e4" stroke-width="1"/><rect x="0.4" y="12.5" width="2.2" height="2.2" fill="none" stroke="#e4e4e4" stroke-width="1"/><rect x="13.4" y="1.3" width="2.2" height="2.2" fill="none" stroke="#e4e4e4" stroke-width="1"/><rect x="13.4" y="12.5" width="2.2" height="2.2" fill="none" stroke="#e4e4e4" stroke-width="1"/></svg>
<span class="t" style="left:144px;top:54px;font-size:12.5px;line-height:12.5px;color:#c8c8c8;transform:scaleX(0.9143);">Console Layer</span>
<svg style="left:114px;top:51px" width="16" height="16" viewBox="0 0 16 16"><path d="M0.6 4V0.6H4M12 0.6h3.4V4M15.4 12v3.4H12M4 15.4H0.6V12" fill="none" stroke="#e4e4e4" stroke-width="1.2" /><path d="M3.5 2.6V13.4M7.5 2.6V13.4M11.5 2.6V13.4" fill="none" stroke="#e4e4e4" stroke-width="1" /><path d="M1.8 10.2h3.4M5.8 6.2h3.4M9.8 7.6h3.4" fill="none" stroke="#e4e4e4" stroke-width="1.6" /></svg>
<span class="t" style="left:144px;top:77px;font-size:12.5px;line-height:12.5px;color:#c8c8c8;transform:scaleX(0.9593);">Content</span>
<svg style="left:114px;top:74px" width="16" height="16" viewBox="0 0 16 16"><path d="M5.6 1.4h5.2l3 3v7.2H5.6zM10.6 1.6v3.2h3.2" fill="none" stroke="#e4e4e4" stroke-width="1.2" stroke-linejoin="round"/><path d="M3.6 4.2v9.3h8.6M2.1 6v9h8.6" fill="none" stroke="#e4e4e4" stroke-width="1.1" /></svg>
<svg style="left:244.5px;top:79.0px" width="4" height="7"><path d="M0 0v7l4-3.5z" fill="#c8c8c8"/></svg>
<span class="t" style="left:144px;top:100px;font-size:12.5px;line-height:12.5px;color:#c8c8c8;transform:scaleX(0.9632);">ControlView</span>
<svg style="left:114px;top:97px" width="16" height="16" viewBox="0 0 16 16"><path d="M2.5 3V14M7.5 3V14M12.5 3V14" fill="none" stroke="#e4e4e4" stroke-width="1.2" /><path d="M0.4 5h4.2M5.4 10.4h4.2M10.4 7.2h4.2" fill="none" stroke="#e4e4e4" stroke-width="1.5" /><path d="M2.5 2.2l1.5 2h-3z" fill="#e4e4e4" /></svg>
<span class="t" style="left:144px;top:123px;font-size:12.5px;line-height:12.5px;color:#c8c8c8;transform:scaleX(0.9183);">DataTable</span>
<svg style="left:114px;top:120px" width="16" height="16" viewBox="0 0 16 16"><rect x="0.5" y="1.5" width="14" height="14" rx="2.2" fill="none" stroke="#e4e4e4" stroke-width="1.2"/><rect x="2.0" y="3.0" width="2" height="2" fill="#e4e4e4" /><rect x="2.0" y="6.0" width="2" height="2" fill="#e4e4e4" /><rect x="2.0" y="9.0" width="2" height="2" fill="#e4e4e4" /><rect x="2.0" y="12.0" width="2" height="2" fill="#e4e4e4" /><rect x="5.0" y="3.0" width="2" height="2" fill="#e4e4e4" /><rect x="5.0" y="6.0" width="2" height="2" fill="#e4e4e4" /><rect x="5.0" y="9.0" width="2" height="2" fill="#e4e4e4" /><rect x="5.0" y="12.0" width="2" height="2" fill="#e4e4e4" /><rect x="8.0" y="3.0" width="2" height="2" fill="#e4e4e4" /><rect x="8.0" y="6.0" width="2" height="2" fill="#e4e4e4" /><rect x="8.0" y="9.0" width="2" height="2" fill="#e4e4e4" /><rect x="8.0" y="12.0" width="2" height="2" fill="#e4e4e4" /><rect x="11.0" y="3.0" width="2" height="2" fill="#e4e4e4" /><rect x="11.0" y="6.0" width="2" height="2" fill="#e4e4e4" /><rect x="11.0" y="9.0" width="2" height="2" fill="#e4e4e4" /><rect x="11.0" y="12.0" width="2" height="2" fill="#e4e4e4" /></svg>
<span class="t" style="left:144px;top:146px;font-size:12.5px;line-height:12.5px;color:#c8c8c8;transform:scaleX(0.9616);">Dmx Video Map</span>
<svg style="left:114px;top:143px" width="16" height="16" viewBox="0 0 16 16"><rect x="1.5" y="1.5" width="13" height="13" fill="none" stroke="#e4e4e4" stroke-width="1.3"/><rect x="3.45" y="3.45" width="2.1" height="2.1" fill="#e4e4e4" /><rect x="3.45" y="6.95" width="2.1" height="2.1" fill="#e4e4e4" /><rect x="3.45" y="10.45" width="2.1" height="2.1" fill="#e4e4e4" /><rect x="6.95" y="3.45" width="2.1" height="2.1" fill="#e4e4e4" /><rect x="6.95" y="6.95" width="2.1" height="2.1" fill="#e4e4e4" /><rect x="6.95" y="10.45" width="2.1" height="2.1" fill="#e4e4e4" /><rect x="10.45" y="3.45" width="2.1" height="2.1" fill="#e4e4e4" /><rect x="10.45" y="6.95" width="2.1" height="2.1" fill="#e4e4e4" /><rect x="10.45" y="10.45" width="2.1" height="2.1" fill="#e4e4e4" /></svg>
<span class="t" style="left:144px;top:169px;font-size:12.5px;line-height:12.5px;color:#c8c8c8;transform:scaleX(0.9198);">GlobalLayer</span>
<svg style="left:114px;top:166px" width="16" height="16" viewBox="0 0 16 16"><path d="M0.6 4V0.6H4M12 0.6h3.4V4M15.4 12v3.4H12M4 15.4H0.6V12" fill="none" stroke="#e4e4e4" stroke-width="1.2" /><circle cx="8" cy="8" r="6.8" fill="#e4e4e4" opacity="0.75"/><path d="M1.2 8h13.6M2.2 4.8h11.6M2.2 11.2h11.6M8 1.2v13.6M8 1.2c-4.4 3-4.4 10.6 0 13.6M8 1.2c4.4 3 4.4 10.6 0 13.6" fill="none" stroke="#262626" stroke-width="0.7"/></svg>
<span class="t" style="left:144px;top:192px;font-size:12.5px;line-height:12.5px;color:#c8c8c8;transform:scaleX(0.9496);">Group</span>
<svg style="left:114px;top:189px" width="16" height="16" viewBox="0 0 16 16"><rect x="5.1" y="0.4" width="6.7" height="5" fill="#e4e4e4" /><rect x="0.1" y="10.4" width="7" height="5.3" fill="#e4e4e4" /><rect x="8.9" y="10.4" width="7" height="5.3" fill="#e4e4e4" /><path d="M8.45 5.4V8M3.6 10.4V8h9.7v2.4" fill="none" stroke="#e4e4e4" stroke-width="1.2" /><path d="M5.1 2h6.7M0.1 12h7M8.9 12h7" stroke="#262626" stroke-width="0.6" opacity="0.6"/></svg>
<span class="t" style="left:144px;top:215px;font-size:12.5px;line-height:12.5px;color:#c8c8c8;transform:scaleX(0.9289);">Node System</span>
<svg style="left:114px;top:212px" width="16" height="16" viewBox="0 0 16 16"><rect x="4.9" y="1.4" width="6.2" height="3.2" fill="none" stroke="#e4e4e4" stroke-width="1.2"/><path d="M8 4.6V8.3M2 11.4V8.3H14V11.4M8 8.3V11.4" fill="none" stroke="#e4e4e4" stroke-width="1.2" /><rect x="0.6" y="11.6" width="2.8" height="2.8" fill="none" stroke="#e4e4e4" stroke-width="1.1"/><rect x="6.6" y="11.6" width="2.8" height="2.8" fill="none" stroke="#e4e4e4" stroke-width="1.1"/><rect x="12.6" y="11.6" width="2.8" height="2.8" fill="none" stroke="#e4e4e4" stroke-width="1.1"/></svg>
<span class="t" style="left:144px;top:238px;font-size:12.5px;line-height:12.5px;color:#c8c8c8;transform:scaleX(0.9508);">Output Stream</span>
<svg style="left:114px;top:235px" width="16" height="16" viewBox="0 0 16 16"><circle cx="8" cy="8.2" r="1.3" fill="#e4e4e4"/><path d="M5.4 5.2a4.2 4.2 0 0 0 0 6M10.6 5.2a4.2 4.2 0 0 1 0 6M2.9 2.6a8 8 0 0 0 0 11.2M13.1 2.6a8 8 0 0 1 0 11.2" fill="none" stroke="#e4e4e4" stroke-width="1.2" stroke-linecap="round"/></svg>
<svg style="left:244.5px;top:240.0px" width="4" height="7"><path d="M0 0v7l4-3.5z" fill="#9a9a9a"/></svg>
<span class="t" style="left:144px;top:261px;font-size:12.5px;line-height:12.5px;color:#c8c8c8;transform:scaleX(0.9067);">Playback</span>
<svg style="left:114px;top:258px" width="16" height="16" viewBox="0 0 16 16"><rect x="0.6" y="0.9" width="14.8" height="14.4" rx="1.6" fill="none" stroke="#e4e4e4" stroke-width="1.3"/><path d="M6 3.2v9.8l6.4-4.9z" fill="#e4e4e4" /></svg>
<span class="t" style="left:144px;top:284px;font-size:12.5px;line-height:12.5px;color:#c8c8c8;transform:scaleX(0.9269);">Playlist</span>
<svg style="left:114px;top:281px" width="16" height="16" viewBox="0 0 16 16"><rect x="1" y="2.2" width="2" height="1.8" fill="#e4e4e4" /><rect x="1" y="6" width="2" height="1.8" fill="#e4e4e4" /><rect x="1" y="9.8" width="2" height="1.8" fill="#e4e4e4" /><rect x="4" y="2.2" width="8.2" height="1.8" fill="#e4e4e4" /><rect x="4" y="6" width="8.2" height="1.8" fill="#e4e4e4" /><rect x="4" y="9.8" width="5.4" height="1.8" fill="#e4e4e4" /><path d="M10.2 9.6v6.4l5.8-3.2z" fill="#e4e4e4" /></svg>
<span class="t" style="left:144px;top:307px;font-size:12.5px;line-height:12.5px;color:#c8c8c8;transform:scaleX(0.9544);">Programmer</span>
<svg style="left:114px;top:304px" width="16" height="16" viewBox="0 0 16 16"><circle cx="7.9" cy="5" r="4" fill="#e4e4e4"/><text x="7.9" y="15.6" font-family="Liberation Sans,sans-serif" font-weight="700" font-size="5.6" text-anchor="middle" fill="#e4e4e4" textLength="14" lengthAdjust="spacingAndGlyphs">PRG</text></svg>
<span class="t" style="left:144px;top:330px;font-size:12.5px;line-height:12.5px;color:#c8c8c8;transform:scaleX(0.9151);">Schedule</span>
<svg style="left:114px;top:327px" width="16" height="16" viewBox="0 0 16 16"><rect x="0.8" y="2.2" width="13.8" height="13" fill="none" stroke="#e4e4e4" stroke-width="1.3"/><rect x="0.8" y="2.2" width="13.8" height="3.2" fill="#e4e4e4" /><path d="M3.6 0.2v3M11.6 0.2v3" fill="none" stroke="#e4e4e4" stroke-width="1.6" /><rect x="2.3" y="6.7" width="1.8" height="1.8" fill="#e4e4e4" /><rect x="2.3" y="9.5" width="1.8" height="1.8" fill="#e4e4e4" /><rect x="2.3" y="12.3" width="1.8" height="1.8" fill="#e4e4e4" /><rect x="5.3" y="6.7" width="1.8" height="1.8" fill="#e4e4e4" /><rect x="5.3" y="9.5" width="1.8" height="1.8" fill="#e4e4e4" /><rect x="5.3" y="12.3" width="1.8" height="1.8" fill="#e4e4e4" /><rect x="8.3" y="6.7" width="1.8" height="1.8" fill="#e4e4e4" /><rect x="8.3" y="9.5" width="1.8" height="1.8" fill="#e4e4e4" /><rect x="8.3" y="12.3" width="1.8" height="1.8" fill="#e4e4e4" /><rect x="11.3" y="6.7" width="1.8" height="1.8" fill="#e4e4e4" /><rect x="11.3" y="9.5" width="1.8" height="1.8" fill="#e4e4e4" /><rect x="11.3" y="12.3" width="1.8" height="1.8" fill="#e4e4e4" /></svg>
<span class="t" style="left:144px;top:353px;font-size:12.5px;line-height:12.5px;color:#c8c8c8;transform:scaleX(0.9389);">Script</span>
<svg style="left:114px;top:350px" width="16" height="16" viewBox="0 0 16 16"><path d="M4.4 4.6L0.9 8l3.5 3.4M11.4 4.6l3.5 3.4l-3.5 3.4M10 4L6 12" fill="none" stroke="#e4e4e4" stroke-width="1.3" /></svg>
<svg style="left:244.5px;top:355.0px" width="4" height="7"><path d="M0 0v7l4-3.5z" fill="#9a9a9a"/></svg>
<span class="t" style="left:144px;top:376px;font-size:12.5px;line-height:12.5px;color:#c8c8c8;transform:scaleX(0.9057);">Sequence</span>
<svg style="left:114px;top:373px" width="16" height="16" viewBox="0 0 16 16"><rect x="0.9" y="7.2" width="7.6" height="1.8" fill="#e4e4e4" /><rect x="0.9" y="10.2" width="12" height="1.8" fill="#e4e4e4" /><rect x="0.9" y="13.1" width="14.2" height="1.8" fill="#e4e4e4" /><path d="M9.2 1.2h4.8v2.6l-2.4 4.2l-2.4-4.2z" fill="#e4e4e4" /></svg>
<span class="t" style="left:144px;top:399px;font-size:12.5px;line-height:12.5px;color:#c8c8c8;transform:scaleX(0.8980);">Surface</span>
<svg style="left:114px;top:396px" width="16" height="16" viewBox="0 0 16 16"><rect x="1.5" y="2.5" width="13" height="11" fill="none" stroke="#e4e4e4" stroke-width="1.1"/><rect x="4.5" y="4.5" width="7.5" height="7" fill="none" stroke="#e4e4e4" stroke-width="1.1"/></svg>
<span class="t" style="left:144px;top:422px;font-size:12.5px;line-height:12.5px;color:#c8c8c8;transform:scaleX(0.8876);">System</span>
<svg style="left:114px;top:419px" width="16" height="16" viewBox="0 0 16 16"><path d="M4.2 0.2h7.6l4 3.9h-15.6z" fill="#e4e4e4" /><rect x="0.2" y="5.1" width="15.6" height="3.2" fill="#e4e4e4" /><rect x="0.2" y="9.2" width="15.6" height="3.2" fill="#e4e4e4" /><rect x="7.2" y="12.4" width="1.6" height="2" fill="#e4e4e4" /><rect x="0.4" y="14.3" width="15.2" height="1.6" fill="#e4e4e4" /><path d="M1.6 6.7h7M1.6 10.8h7" stroke="#262626" stroke-width="1" stroke-dasharray="1 0.8"/><path d="M12.5 6.7h1.4M12.5 10.8h1.4" stroke="#262626" stroke-width="1"/><path d="M2.2 14.3v1.6M13.8 14.3v1.6" stroke="#262626" stroke-width="0.9"/></svg>
<span class="t" style="left:144px;top:445px;font-size:12.5px;line-height:12.5px;color:#c8c8c8;transform:scaleX(0.8781);">Tag</span>
<svg style="left:114px;top:442px" width="16" height="16" viewBox="0 0 16 16"><path d="M1.8 0.8h9.2l3.6 3.8v10.6H1.8z" fill="none" stroke="#e4e4e4" stroke-width="1.3" /><path d="M5.1 0.8h3.9v10l-1.95-1.8l-1.95 1.8z" fill="#e4e4e4" /></svg>
<span class="t" style="left:144px;top:468px;font-size:12.5px;line-height:12.5px;color:#c8c8c8;transform:scaleX(0.9433);">Timer</span>
<svg style="left:114px;top:465px" width="16" height="16" viewBox="0 0 16 16"><circle cx="7.6" cy="9.2" r="5.9" fill="none" stroke="#e4e4e4" stroke-width="1.4"/><rect x="5.8" y="0.1" width="3.6" height="2" fill="#e4e4e4" /><path d="M7.6 2v1.4M2.3 4.2l1.3 1.2M12.9 4.2l-1.3 1.2" fill="none" stroke="#e4e4e4" stroke-width="1.2" /><path d="M7.6 5.6v3.8h3.4" fill="none" stroke="#e4e4e4" stroke-width="1.2" /></svg>
<span class="t" style="left:144px;top:491px;font-size:12.5px;line-height:12.5px;color:#c8c8c8;transform:scaleX(0.9376);">Trigger</span>
<svg style="left:114px;top:488px" width="16" height="16" viewBox="0 0 16 16"><path d="M9.2 0.8h4.4l-3.4 5.2h3L5 15.4l2.4-7h-3z" fill="none" stroke="#e4e4e4" stroke-width="1.1" stroke-linejoin="round"/></svg>
<span class="t" style="left:144px;top:514px;font-size:12.5px;line-height:12.5px;color:#c8c8c8;transform:scaleX(0.9346);">Variable</span>
<svg style="left:114px;top:511px" width="16" height="16" viewBox="0 0 16 16"><text x="7.8" y="11.6" font-family="Liberation Serif,serif" font-size="13.5" text-anchor="middle" fill="#e4e4e4"><tspan>(</tspan><tspan font-style="italic" font-weight="700">x</tspan><tspan>)</tspan></text></svg>
<span class="t" style="left:144px;top:537px;font-size:12.5px;line-height:12.5px;color:#c8c8c8;transform:scaleX(0.9302);">View</span>
<svg style="left:114px;top:534px" width="16" height="16" viewBox="0 0 16 16"><rect x="0.6" y="1.8" width="14.8" height="13.4" fill="none" stroke="#e4e4e4" stroke-width="1.3"/><path d="M0.6 4.9h14.8M5.2 4.9v10.3" fill="none" stroke="#e4e4e4" stroke-width="1.2" /></svg>
<span class="t" style="left:144px;top:560px;font-size:12.5px;line-height:12.5px;color:#c8c8c8;transform:scaleX(0.9417);">WatchFolder</span>
<svg style="left:114px;top:557px" width="16" height="16" viewBox="0 0 16 16"><path d="M0.6 13.7V1.9h5l2 2h7.8v9.8z" fill="none" stroke="#e4e4e4" stroke-width="1.2" stroke-linejoin="round"/><path d="M3.8 8.8q4.2-3.8 8.4 0q-4.2 3.8-8.4 0z" fill="none" stroke="#e4e4e4" stroke-width="0.9" /><circle cx="8" cy="8.8" r="1.4" fill="#e4e4e4"/></svg>
<svg style="left:244.5px;top:562.0px" width="4" height="7"><path d="M0 0v7l4-3.5z" fill="#9a9a9a"/></svg>
<span class="t" style="left:144px;top:583px;font-size:12.5px;line-height:12.5px;color:#c8c8c8;transform:scaleX(0.9796);">Wiring</span>
<svg style="left:114px;top:580px" width="16" height="16" viewBox="0 0 16 16"><circle cx="2.3" cy="2.9" r="1.4" fill="#e4e4e4"/><circle cx="2.3" cy="12.7" r="1.4" fill="#e4e4e4"/><circle cx="13" cy="7.6" r="1.4" fill="#e4e4e4"/><path d="M2 7.6h11M2.3 2.9h2.4c3 0 3.6 2.2 3.8 4.7M2.3 12.7h2.4c3 0 3.6-2.6 3.8-5.1" fill="none" stroke="#e4e4e4" stroke-width="1.3" /></svg>
<div style="left:259px;top:70px;width:248.5px;height:354px;background:#262626;box-sizing:border-box;border:1px solid #333333;"></div>
<div style="left:259px;top:72px;width:247.3px;height:22px;background:#0079ca;"></div>
<span class="t" style="left:293px;top:78px;font-size:12.5px;line-height:12.5px;color:#c8c8c8;transform:scaleX(0.9314);">Import File...</span>
<span class="t" style="left:293px;top:149px;font-size:12.5px;line-height:12.5px;color:#c8c8c8;transform:scaleX(0.9486);">Import Image Sequence Directory...</span>
<span class="t" style="left:293px;top:174px;font-size:12.5px;line-height:12.5px;color:#c8c8c8;transform:scaleX(0.9375);">Add Live Input...</span>
<span class="t" style="left:293px;top:197px;font-size:12.5px;line-height:12.5px;color:#c8c8c8;transform:scaleX(0.9177);">Add Text...</span>
<span class="t" style="left:293px;top:220px;font-size:12.5px;line-height:12.5px;color:#c8c8c8;transform:scaleX(0.9242);">Add Mask...</span>
<span class="t" style="left:293px;top:243px;font-size:12.5px;line-height:12.5px;color:#c8c8c8;transform:scaleX(0.9329);">Colors</span>
<svg style="left:494px;top:244.7px" width="4" height="7"><path d="M0 0v7l4-3.5z" fill="#9a9a9a"/></svg>
<span class="t" style="left:293px;top:266px;font-size:12.5px;line-height:12.5px;color:#c8c8c8;transform:scaleX(0.9235);">Patterns</span>
<svg style="left:494px;top:267.7px" width="4" height="7"><path d="M0 0v7l4-3.5z" fill="#9a9a9a"/></svg>
<span class="t" style="left:293px;top:289px;font-size:12.5px;line-height:12.5px;color:#c8c8c8;transform:scaleX(0.9262);">Add Playback Dashboard...</span>
<span class="t" style="left:293px;top:312px;font-size:12.5px;line-height:12.5px;color:#c8c8c8;transform:scaleX(0.9099);">Add QR Code...</span>
<span class="t" style="left:293px;top:335px;font-size:12.5px;line-height:12.5px;color:#c8c8c8;transform:scaleX(0.9316);">Add Video Stream...</span>
<span class="t" style="left:293px;top:357px;font-size:12.5px;line-height:12.5px;color:#c8c8c8;transform:scaleX(0.9333);">Add Image Url...</span>
<span class="t" style="left:293px;top:380px;font-size:12.5px;line-height:12.5px;color:#c8c8c8;transform:scaleX(0.9562);">Add Html Content...</span>
<span class="t" style="left:293px;top:403px;font-size:12.5px;line-height:12.5px;color:#c8c8c8;transform:scaleX(0.9365);">Objects</span>
<svg style="left:494px;top:404.7px" width="4" height="7"><path d="M0 0v7l4-3.5z" fill="#9a9a9a"/></svg>
<span class="t" style="left:455.7px;top:78px;font-size:12.5px;line-height:12.5px;color:#c8c8c8;transform:scaleX(0.9795);">Ctrl+I</span>
<div style="left:287px;top:166px;width:218px;height:1px;background:#3a3a3a;"></div>
<div style="left:287px;top:420.5px;width:218px;height:1px;background:#333333;"></div>
<div style="left:258.5px;top:95px;width:486px;height:55.5px;background:#262626;box-sizing:border-box;border:1px solid #3c3c3c;"></div>
<span class="t" style="left:262.4px;top:102px;font-size:12.5px;line-height:12.5px;color:#e4e4e4;transform:scaleX(0.9675);">Import new Content - Opens a Windows Explorer Window to select the content for import.</span>
<span class="t" style="left:262.4px;top:118px;font-size:12.5px;line-height:12.5px;color:#e4e4e4;transform:scaleX(0.9607);">To only import Content for one specific target System:</span>
<span class="t" style="left:262.4px;top:134px;font-size:12.5px;line-height:12.5px;color:#e4e4e4;transform:scaleX(0.9501);">Select a System, open the Context Menu there and click to "Import File".</span>
</div></body></html>
